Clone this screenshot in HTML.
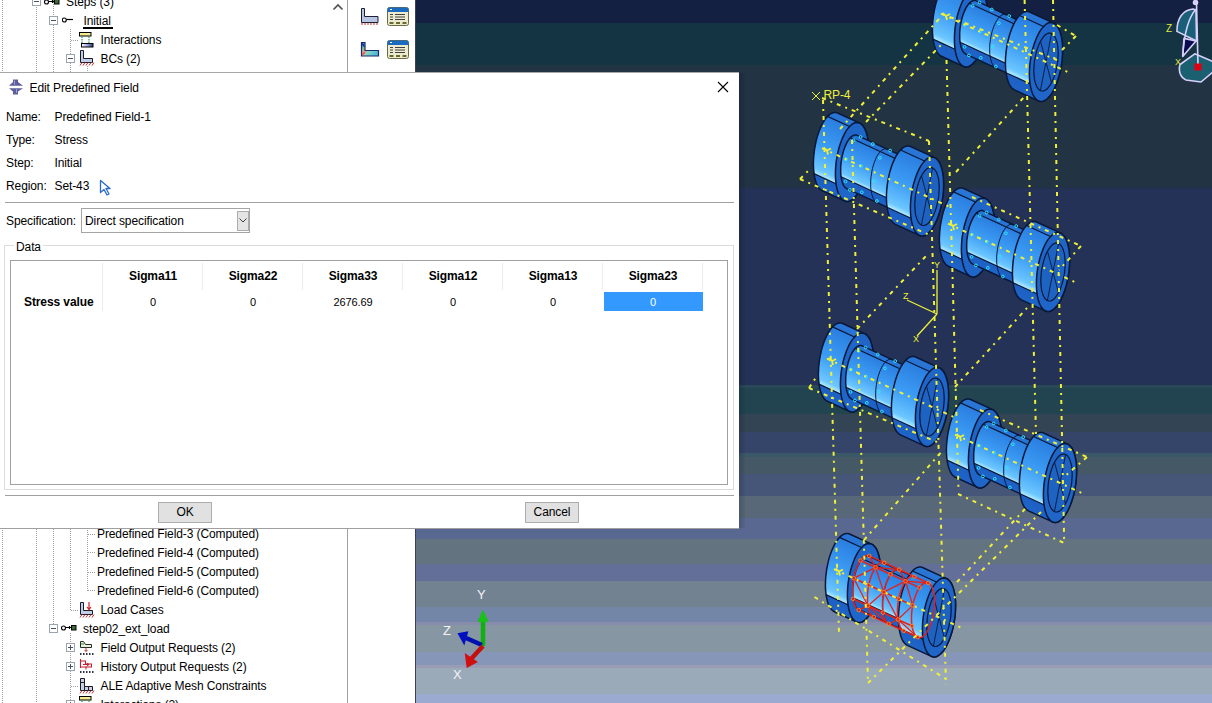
<!DOCTYPE html>
<html><head><meta charset="utf-8">
<style>
*{box-sizing:border-box;margin:0;padding:0}
html,body{width:1212px;height:703px;overflow:hidden;background:#fff}
body{position:relative;font-family:"Liberation Sans",sans-serif;font-size:12px;color:#000;letter-spacing:-0.1px}
.a{position:absolute}
.t{position:absolute;white-space:nowrap;line-height:21px;height:21px}
.vd{position:absolute;width:1px;background:repeating-linear-gradient(to bottom,#a0a0a0 0 1px,transparent 1px 2px)}
.hd{position:absolute;height:1px;background:repeating-linear-gradient(to right,#a0a0a0 0 1px,transparent 1px 2px)}
.bx{position:absolute;width:9px;height:9px;border:1px solid #9aa3b0;background:#fff}
.bx:before{content:"";position:absolute;left:1px;top:3px;width:5px;height:1px;background:#4a5060}
.bx.p:after{content:"";position:absolute;left:3px;top:1px;width:1px;height:5px;background:#4a5060}
#vp{position:absolute;left:415px;top:0;width:797px;height:703px;overflow:hidden}
#dlg{position:absolute;left:0;top:72px;width:739px;height:457px;background:#fff;border-top:1px solid #a8a8a8;border-bottom:1px solid #a0a0a0}
.btn{position:absolute;background:#e1e1e1;border:1px solid #adadad;text-align:center;line-height:18px}
</style></head><body>


<svg width="0" height="0" style="position:absolute">
<defs>
<linearGradient id="gBar" x1="0" x2="1"><stop offset="0" stop-color="#fff"/><stop offset="0.5" stop-color="#9aa8e0"/><stop offset="1" stop-color="#2a3a7a"/></linearGradient>
<g id="i-step1"><circle cx="2.3" cy="8" r="2" fill="#fff" stroke="#000" stroke-width="1.1"/><path d="M4.3 7.5H11" stroke="#000" stroke-width="1.2"/></g>
<g id="i-step3"><circle cx="2.5" cy="8" r="2" fill="#fff" stroke="#000" stroke-width="1.1"/><path d="M4.5 7.5H10.5M8.5 6v3" stroke="#000" stroke-width="1.1"/><rect x="10.5" y="5.5" width="4.5" height="4.5" fill="#3d6b3d" stroke="#000" stroke-width="1"/></g>
<g id="i-inter"><rect x="0.5" y="0.5" width="11.5" height="3.5" fill="#f5ec90" stroke="#000" stroke-width="1"/><path d="M3 4.5v7M10 4.5v7" stroke="#1e9a4a" stroke-width="1.2" stroke-dasharray="1.5 1"/><rect x="2.5" y="11.5" width="11.5" height="3.5" fill="url(#gBar)" stroke="#000" stroke-width="1"/></g>
<g id="i-bc"><path d="M1.5 0.5h3v8h9v4h-12z" fill="#c2cde6" stroke="#1a1a2a" stroke-width="1"/><path d="M1 15.5l2-3M4 15.5l2-3M7 15.5l2-3M10 15.5l2-3M13 15.5l2-3" stroke="#c03030" stroke-width="1"/></g>
<g id="i-lc"><path d="M1.5 0.5h3v8h9v4h-12z" fill="#c2cde6" stroke="#1a1a2a" stroke-width="1"/><path d="M10 0v7M8 5l2 2.5 2-2.5" stroke="#d02020" stroke-width="1.2" fill="none"/><path d="M1 15.5l2-3M4 15.5l2-3M7 15.5l2-3M10 15.5l2-3M13 15.5l2-3" stroke="#c03030" stroke-width="1"/></g>
<g id="i-fo"><path d="M1.5 1.5h3l2 3h6v3h-11z" fill="#e8f0e0" stroke="#203020" stroke-width="1"/><path d="M2 4h3" stroke="#3a8a3a"/><path d="M7 7.5v4M5.5 10l1.5 1.5 1.5-1.5" stroke="#c03030" fill="none"/><path d="M1 14h1.5M4 14h1.5M7 14h1.5M10 14h1.5M13 14h1.5" stroke="#303040" stroke-width="2"/></g>
<g id="i-ho"><path d="M1.5 1v9M1.5 3h5v3h6v3h-11" fill="none" stroke="#c02030" stroke-width="1.1"/><path d="M4 6.5h6M8 5l2 1.5-2 1.5M7 8.5v3" stroke="#c02030" fill="none"/><path d="M1 14h1.5M4 14h1.5M7 14h1.5M10 14h1.5M13 14h1.5" stroke="#303040" stroke-width="2"/></g>
<g id="i-ale"><path d="M1.5 0.5h4v8h8v4h-12z" fill="#c8d0e4" stroke="#1a1a2a" stroke-width="1"/><path d="M1.5 4.5h4M5.5 8.5v4M9.5 8.5v4" stroke="#1a1a2a"/><path d="M1 15.5l2-3M4 15.5l2-3M7 15.5l2-3M10 15.5l2-3M13 15.5l2-3" stroke="#c03030" stroke-width="1"/></g>
</defs></svg>

<div class="a" style="left:0;top:0;width:348px;height:703px;border-right:1px solid #a0a0a0;background:#fff"></div>
<div class="vd" style="left:2px;top:0;height:703px"></div>
<div class="vd" style="left:36px;top:7px;height:696px"></div>
<div class="vd" style="left:53px;top:0;height:16px"></div>
<div class="vd" style="left:53px;top:25px;height:599px"></div>
<div class="vd" style="left:70px;top:29px;height:25px"></div>
<div class="vd" style="left:70px;top:63px;height:547px"></div>
<div class="vd" style="left:70px;top:633px;height:70px"></div>
<div class="vd" style="left:87px;top:66px;height:525px"></div>
<svg class="a" style="left:332px;top:3px" width="12" height="8" viewBox="0 0 12 8"><path d="M1.5 6.5L6 2l4.5 4.5" stroke="#505050" stroke-width="1.6" fill="none"/></svg>

<div class="bx" style="left:32px;top:-3px"></div>
<svg class="a" style="left:44px;top:-6px" width="16" height="16"><use href="#i-step3"/></svg>
<div class="t" style="left:66px;top:-8px">Steps (3)</div>
<div class="bx" style="left:49px;top:16px"></div>
<svg class="a" style="left:62px;top:12px" width="16" height="16"><use href="#i-step1"/></svg>
<div class="t" style="left:83.5px;top:11px">Initial</div>
<div class="a" style="left:83px;top:27px;width:30px;height:2px;background:#000"></div>
<div class="hd" style="left:71px;top:40px;width:7px"></div>
<svg class="a" style="left:79px;top:32px" width="16" height="16"><use href="#i-inter"/></svg>
<div class="t" style="left:100.5px;top:30px">Interactions</div>
<div class="bx" style="left:66px;top:54px"></div>
<svg class="a" style="left:79px;top:50px" width="16" height="16"><use href="#i-bc"/></svg>
<div class="t" style="left:100.5px;top:49px">BCs (2)</div>
<div class="hd" style="left:88px;top:534px;width:7px"></div>
<div class="t" style="left:97px;top:524px">Predefined Field-3 (Computed)</div>
<div class="hd" style="left:88px;top:552px;width:7px"></div>
<div class="t" style="left:97px;top:543px">Predefined Field-4 (Computed)</div>
<div class="hd" style="left:88px;top:572px;width:7px"></div>
<div class="t" style="left:97px;top:562px">Predefined Field-5 (Computed)</div>
<div class="hd" style="left:88px;top:590px;width:7px"></div>
<div class="t" style="left:97px;top:581px">Predefined Field-6 (Computed)</div>
<div class="hd" style="left:71px;top:610px;width:7px"></div>
<svg class="a" style="left:79px;top:602px" width="16" height="16"><use href="#i-lc"/></svg>
<div class="t" style="left:100.5px;top:600px">Load Cases</div>
<div class="bx" style="left:49px;top:624px"></div>
<svg class="a" style="left:61px;top:620px" width="16" height="16"><use href="#i-step3"/></svg>
<div class="t" style="left:83px;top:619px">step02_ext_load</div>
<div class="bx p" style="left:66px;top:643px"></div>
<svg class="a" style="left:79px;top:640px" width="16" height="16"><use href="#i-fo"/></svg>
<div class="t" style="left:100.5px;top:638px">Field Output Requests (2)</div>
<div class="bx p" style="left:66px;top:662px"></div>
<svg class="a" style="left:79px;top:658px" width="16" height="16"><use href="#i-ho"/></svg>
<div class="t" style="left:100.5px;top:657px">History Output Requests (2)</div>
<div class="hd" style="left:71px;top:686px;width:7px"></div>
<svg class="a" style="left:79px;top:678px" width="16" height="16"><use href="#i-ale"/></svg>
<div class="t" style="left:100.5px;top:676px">ALE Adaptive Mesh Constraints</div>
<div class="bx p" style="left:66px;top:700px"></div>
<svg class="a" style="left:79px;top:696px" width="16" height="16"><use href="#i-inter"/></svg>
<div class="t" style="left:100.5px;top:695px">Interactions (2)</div>

<svg class="a" style="left:360px;top:7px" width="20" height="19" viewBox="0 0 20 19"><path d="M1.5 1.5h3v8h13.5v6h-16.5z" fill="#b8c4e4" stroke="#202030" stroke-width="1"/><path d="M2 16v2M5 16v2M8 16v2M11 16v2M14 16v2M17 16v2" stroke="#c03030" stroke-width="1"/></svg>
<svg class="a" style="left:387px;top:7px" width="23" height="20" viewBox="0 0 23 20"><rect x="0.5" y="0.5" width="21" height="18" rx="2" fill="#ecebd0" stroke="#6a6a40"/><path d="M0.5 5V2.5a2 2 0 0 1 2-2h17a2 2 0 0 1 2 2V5z" fill="#1a6ac0"/><path d="M3 2.5h2" stroke="#fff"/><path d="M3 7.5h3M3 10h3M3 12.5h3M8 7.5h10M8 10h10M8 12.5h10" stroke="#404040" stroke-width="1"/><path d="M2.5 16h4M9 16h4M15.5 16h4" stroke="#6a6a30" stroke-width="2"/></svg>
<svg class="a" style="left:360px;top:41px" width="21" height="17" viewBox="0 0 21 17"><defs><linearGradient id="gct" x1="0" y1="0" x2="1" y2="0.6"><stop offset="0" stop-color="#3050c8"/><stop offset="0.25" stop-color="#70c890"/><stop offset="0.4" stop-color="#f0a090"/><stop offset="0.6" stop-color="#80d8c0"/><stop offset="1" stop-color="#50b8d8"/></linearGradient></defs><path d="M1.5 1.5h3.5v8h13.5v5.5h-17z" fill="url(#gct)" stroke="#1a2a6a" stroke-width="1.2"/><path d="M2 2.5l2.5 3" stroke="#1830a0" stroke-width="1.5"/><path d="M2 14l3-3" stroke="#e05060" stroke-width="1.5"/></svg>
<svg class="a" style="left:387px;top:40px" width="23" height="20" viewBox="0 0 23 20"><rect x="0.5" y="0.5" width="21" height="18" rx="2" fill="#ecebd0" stroke="#6a6a40"/><path d="M0.5 5V2.5a2 2 0 0 1 2-2h17a2 2 0 0 1 2 2V5z" fill="#1a6ac0"/><path d="M3 2.5h2" stroke="#fff"/><path d="M3 7.5h3M3 10h3M3 12.5h3M8 7.5h10M8 10h10M8 12.5h10" stroke="#404040" stroke-width="1"/><path d="M2.5 16h4M9 16h4M15.5 16h4" stroke="#6a6a30" stroke-width="2"/></svg>


<div id="vp">
<svg width="797" height="703" viewBox="415 0 797 703" style="position:absolute;left:0;top:0">
<rect x="415" y="0" width="797" height="23" fill="#142042"/>
<rect x="415" y="23" width="797" height="42" fill="#143444"/>
<rect x="415" y="65" width="797" height="122" fill="#223344"/>
<rect x="415" y="187" width="797" height="2" fill="#22324e"/>
<rect x="415" y="189" width="797" height="196" fill="#233256"/>
<rect x="415" y="385" width="797" height="3" fill="#294858"/>
<rect x="415" y="388" width="797" height="26" fill="#214450"/>
<rect x="415" y="414" width="797" height="18" fill="#334454"/>
<rect x="415" y="432" width="797" height="21" fill="#35456a"/>
<rect x="415" y="453" width="797" height="4" fill="#3a5868"/>
<rect x="415" y="457" width="797" height="17" fill="#445866"/>
<rect x="415" y="474" width="797" height="22" fill="#465678"/>
<rect x="415" y="496" width="797" height="22" fill="#586878"/>
<rect x="415" y="518" width="797" height="21" fill="#586890"/>
<rect x="415" y="539" width="797" height="25" fill="#637380"/>
<rect x="415" y="564" width="797" height="17" fill="#646f99"/>
<rect x="415" y="581" width="797" height="26" fill="#728290"/>
<rect x="415" y="607" width="797" height="15" fill="#7486a8"/>
<rect x="415" y="622" width="797" height="3" fill="#888cac"/>
<rect x="415" y="625" width="797" height="27" fill="#8696a3"/>
<rect x="415" y="652" width="797" height="13" fill="#8696b8"/>
<rect x="415" y="665" width="797" height="3" fill="#9a9cb4"/>
<rect x="415" y="668" width="797" height="26" fill="#9aaab8"/>
<rect x="415" y="694" width="797" height="9" fill="#9aaad0"/>
<rect x="415" y="0" width="1" height="703" fill="#3a4050"/>
<linearGradient id="g0L" gradientUnits="userSpaceOnUse" x1="976.1" y1="-12.6" x2="943.9" y2="57.5"><stop offset="0" stop-color="#2a76d6"/><stop offset="0.095" stop-color="#2874d4"/><stop offset="0.095" stop-color="#2a7ee0"/><stop offset="0.469" stop-color="#3c9cf4"/><stop offset="0.772" stop-color="#6cc6ff"/><stop offset="0.842" stop-color="#b8eeff"/><stop offset="0.842" stop-color="#1d60c4"/><stop offset="1" stop-color="#1f64c8"/></linearGradient>
<linearGradient id="g0S" gradientUnits="userSpaceOnUse" x1="1007.0" y1="15.1" x2="985.0" y2="62.9"><stop offset="0" stop-color="#2a76d6"/><stop offset="0.095" stop-color="#2874d4"/><stop offset="0.095" stop-color="#2a7ee0"/><stop offset="0.469" stop-color="#3c9cf4"/><stop offset="0.772" stop-color="#6cc6ff"/><stop offset="0.842" stop-color="#b8eeff"/><stop offset="0.842" stop-color="#1d60c4"/><stop offset="1" stop-color="#1f64c8"/></linearGradient>
<linearGradient id="g0R" gradientUnits="userSpaceOnUse" x1="1050.1" y1="21.5" x2="1017.9" y2="91.5"><stop offset="0" stop-color="#2a76d6"/><stop offset="0.095" stop-color="#2874d4"/><stop offset="0.095" stop-color="#2a7ee0"/><stop offset="0.469" stop-color="#3c9cf4"/><stop offset="0.772" stop-color="#6cc6ff"/><stop offset="0.842" stop-color="#b8eeff"/><stop offset="0.842" stop-color="#1d60c4"/><stop offset="1" stop-color="#1f64c8"/></linearGradient>
<path d="M978.6,-11.4 L980.0,-10.6 L981.3,-9.3 L982.6,-7.8 L983.7,-5.9 L984.7,-3.6 L985.5,-1.1 L986.2,1.7 L986.8,4.8 L987.2,8.1 L987.5,11.5 L987.6,15.1 L987.5,18.9 L987.3,22.7 L986.9,26.6 L986.4,30.4 L985.7,34.3 L984.9,38.1 L984.0,41.7 L982.9,45.3 L981.7,48.7 L980.4,51.8 L979.0,54.8 L977.6,57.4 L976.0,59.8 L974.5,61.9 L972.9,63.6 L971.2,65.0 L969.6,66.0 L968.0,66.7 L966.4,67.0 L964.9,66.9 L963.4,66.4 L941.4,56.3 L940.0,55.4 L938.7,54.2 L937.4,52.7 L936.3,50.7 L935.3,48.5 L934.5,46.0 L933.8,43.2 L933.2,40.1 L932.8,36.8 L932.5,33.4 L932.4,29.7 L932.5,26.0 L932.7,22.2 L933.1,18.3 L933.6,14.4 L934.3,10.6 L935.1,6.8 L936.0,3.1 L937.1,-0.4 L938.3,-3.8 L939.6,-6.9 L941.0,-9.9 L942.4,-12.5 L944.0,-14.9 L945.5,-17.0 L947.1,-18.7 L948.8,-20.1 L950.4,-21.2 L952.0,-21.8 L953.6,-22.1 L955.1,-22.0 L956.6,-21.5Z" fill="url(#g0L)" stroke="#081838" stroke-width="1.5"/>
<path d="M968.5,-8.0 L946.5,-18.1" stroke="#081838" stroke-width="1.2"/>
<path d="M955.0,49.2 L933.0,39.1" stroke="#081838" stroke-width="1.2"/>
<path d="M954.4,39.4 L954.5,35.6 L954.7,31.8 L955.1,27.9 L955.7,24.0 L956.4,20.2 L957.2,16.4 L958.2,12.8 L959.3,9.2 L960.5,5.9 L961.8,2.8 L963.2,-0.1 L964.7,-2.8 L966.2,-5.1 L967.8,-7.1 L969.4,-8.8 L971.0,-10.2 L972.6,-11.2 L974.2,-11.8 L975.8,-12.0 L977.3,-11.8 L978.8,-11.3 L980.2,-10.4 L981.5,-9.1 L982.7,-7.5 L983.8,-5.6 L984.8,-3.3 L985.6,-0.7 L986.3,2.1 L986.9,5.2 L987.3,8.5 L987.5,12.0 L987.6,15.6 L987.5,19.4 L987.3,23.2 L986.9,27.1 L986.3,31.0 L985.6,34.8 L984.8,38.6 L983.8,42.2 L982.7,45.8 L981.5,49.1 L980.2,52.2 L978.8,55.1 L977.3,57.8 L975.8,60.1 L974.2,62.1 L972.6,63.8 L971.0,65.2 L969.4,66.2 L967.8,66.8 L966.2,67.0 L964.7,66.8 L963.2,66.3 L961.8,65.4 L960.5,64.1 L959.3,62.5 L958.2,60.6 L957.2,58.3 L956.4,55.7 L955.7,52.9 L955.1,49.8 L954.7,46.5 L954.5,43.0Z" fill="#1f66c8" stroke="#081838" stroke-width="1.5"/>
<path d="M1027.2,24.4 L1028.2,24.9 L1029.1,25.8 L1029.9,26.8 L1030.7,28.2 L1031.3,29.7 L1031.9,31.4 L1032.4,33.3 L1032.8,35.4 L1033.1,37.7 L1033.3,40.0 L1033.3,42.5 L1033.3,45.1 L1033.2,47.7 L1032.9,50.3 L1032.5,53.0 L1032.1,55.6 L1031.5,58.2 L1030.9,60.7 L1030.1,63.1 L1029.3,65.4 L1028.4,67.6 L1027.5,69.6 L1026.5,71.4 L1025.4,73.0 L1024.4,74.5 L1023.3,75.7 L1022.2,76.6 L1021.0,77.3 L1019.9,77.8 L1018.9,78.0 L1017.8,77.9 L1016.8,77.6 L965.8,54.1 L964.8,53.5 L963.9,52.7 L963.1,51.6 L962.3,50.3 L961.7,48.8 L961.1,47.0 L960.6,45.1 L960.2,43.0 L959.9,40.8 L959.7,38.4 L959.7,36.0 L959.7,33.4 L959.8,30.8 L960.1,28.1 L960.5,25.5 L960.9,22.9 L961.5,20.3 L962.1,17.8 L962.9,15.3 L963.7,13.0 L964.6,10.9 L965.5,8.9 L966.5,7.0 L967.6,5.4 L968.6,4.0 L969.7,2.8 L970.8,1.9 L972.0,1.2 L973.1,0.7 L974.1,0.5 L975.2,0.6 L976.2,0.9Z" fill="url(#g0S)" stroke="#081838" stroke-width="1.5"/>
<path d="M1020.3,26.7 L969.3,3.3" stroke="#081838" stroke-width="1.2"/>
<path d="M1011.1,65.8 L960.1,42.3" stroke="#081838" stroke-width="1.2"/>
<path d="M995.8,67.9 L994.8,67.3 L993.9,66.5 L993.1,65.4 L992.3,64.1 L991.7,62.6 L991.1,60.8 L990.6,58.9 L990.2,56.8 L989.9,54.6 L989.7,52.2 L989.7,49.8 L989.7,47.2 L989.8,44.6 L990.1,41.9 L990.5,39.3 L990.9,36.7 L991.5,34.1 L992.1,31.6 L992.9,29.1 L993.7,26.8 L994.6,24.7 L995.5,22.7 L996.5,20.8 L997.6,19.2 L998.6,17.8 L999.7,16.6 L1000.8,15.7 L1002.0,15.0 L1003.1,14.5 L1004.1,14.3 L1005.2,14.4 L1006.2,14.7" fill="none" stroke="#081838" stroke-width="1"/>
<path d="M1053.6,23.1 L1055.0,23.9 L1056.3,25.2 L1057.6,26.7 L1058.7,28.6 L1059.7,30.9 L1060.5,33.4 L1061.2,36.2 L1061.8,39.3 L1062.2,42.6 L1062.5,46.0 L1062.6,49.6 L1062.5,53.4 L1062.3,57.2 L1061.9,61.1 L1061.4,64.9 L1060.7,68.8 L1059.9,72.6 L1059.0,76.2 L1057.9,79.8 L1056.7,83.2 L1055.4,86.3 L1054.0,89.3 L1052.6,91.9 L1051.0,94.3 L1049.5,96.4 L1047.9,98.1 L1046.2,99.5 L1044.6,100.5 L1043.0,101.2 L1041.4,101.5 L1039.9,101.4 L1038.4,100.9 L1014.4,89.9 L1013.0,89.0 L1011.7,87.8 L1010.4,86.2 L1009.3,84.3 L1008.3,82.1 L1007.5,79.6 L1006.8,76.7 L1006.2,73.7 L1005.8,70.4 L1005.5,66.9 L1005.4,63.3 L1005.5,59.6 L1005.7,55.8 L1006.1,51.9 L1006.6,48.0 L1007.3,44.2 L1008.1,40.4 L1009.0,36.7 L1010.1,33.2 L1011.3,29.8 L1012.6,26.6 L1014.0,23.7 L1015.4,21.0 L1017.0,18.6 L1018.5,16.6 L1020.1,14.8 L1021.8,13.4 L1023.4,12.4 L1025.0,11.8 L1026.6,11.5 L1028.1,11.6 L1029.6,12.0Z" fill="url(#g0R)" stroke="#081838" stroke-width="1.5"/>
<path d="M1043.5,26.5 L1019.5,15.5" stroke="#081838" stroke-width="1.2"/>
<path d="M1030.0,83.7 L1006.0,72.7" stroke="#081838" stroke-width="1.2"/>
<path d="M1029.4,73.8 L1029.5,70.1 L1029.7,66.3 L1030.1,62.4 L1030.7,58.5 L1031.4,54.7 L1032.2,50.9 L1033.2,47.3 L1034.3,43.7 L1035.5,40.4 L1036.8,37.3 L1038.2,34.4 L1039.7,31.7 L1041.2,29.4 L1042.8,27.4 L1044.4,25.7 L1046.0,24.3 L1047.6,23.3 L1049.2,22.7 L1050.8,22.5 L1052.3,22.7 L1053.8,23.2 L1055.2,24.1 L1056.5,25.4 L1057.7,27.0 L1058.8,28.9 L1059.8,31.2 L1060.6,33.8 L1061.3,36.6 L1061.9,39.7 L1062.3,43.0 L1062.5,46.5 L1062.6,50.1 L1062.5,53.9 L1062.3,57.7 L1061.9,61.6 L1061.3,65.5 L1060.6,69.3 L1059.8,73.1 L1058.8,76.7 L1057.7,80.3 L1056.5,83.6 L1055.2,86.7 L1053.8,89.6 L1052.3,92.3 L1050.8,94.6 L1049.2,96.6 L1047.6,98.3 L1046.0,99.7 L1044.4,100.7 L1042.8,101.3 L1041.2,101.5 L1039.7,101.3 L1038.2,100.8 L1036.8,99.9 L1035.5,98.6 L1034.3,97.0 L1033.2,95.1 L1032.2,92.8 L1031.4,90.2 L1030.7,87.4 L1030.1,84.3 L1029.7,81.0 L1029.5,77.5Z" fill="#1f66c8" stroke="#081838" stroke-width="1.5"/>
<path d="M1033.8,70.7 L1033.9,67.9 L1034.1,65.1 L1034.3,62.3 L1034.7,59.5 L1035.3,56.6 L1035.9,53.9 L1036.6,51.2 L1037.4,48.6 L1038.3,46.1 L1039.2,43.8 L1040.3,41.7 L1041.3,39.8 L1042.5,38.1 L1043.6,36.6 L1044.8,35.3 L1046.0,34.3 L1047.2,33.6 L1048.4,33.2 L1049.5,33.0 L1050.7,33.1 L1051.7,33.5 L1052.8,34.2 L1053.7,35.1 L1054.6,36.3 L1055.4,37.7 L1056.1,39.4 L1056.7,41.3 L1057.3,43.4 L1057.7,45.6 L1057.9,48.1 L1058.1,50.6 L1058.2,53.3 L1058.1,56.1 L1057.9,58.9 L1057.7,61.7 L1057.3,64.5 L1056.7,67.4 L1056.1,70.1 L1055.4,72.8 L1054.6,75.4 L1053.7,77.9 L1052.8,80.2 L1051.7,82.3 L1050.7,84.2 L1049.5,85.9 L1048.4,87.4 L1047.2,88.7 L1046.0,89.7 L1044.8,90.4 L1043.6,90.8 L1042.5,91.0 L1041.3,90.9 L1040.3,90.5 L1039.2,89.8 L1038.3,88.9 L1037.4,87.7 L1036.6,86.3 L1035.9,84.6 L1035.3,82.7 L1034.7,80.6 L1034.3,78.4 L1034.1,75.9 L1033.9,73.4Z" fill="#1e62c2" stroke="#081838" stroke-width="1.2"/>
<path d="M1051.6,33.4 L1040.4,90.6" stroke="#081838" stroke-width="0.9"/>
<path d="M1051.5,82.8 L1040.5,41.2" stroke="#081838" stroke-width="0.9"/>
<linearGradient id="g1L" gradientUnits="userSpaceOnUse" x1="857.1" y1="121.9" x2="824.9" y2="192.0"><stop offset="0" stop-color="#2a76d6"/><stop offset="0.095" stop-color="#2874d4"/><stop offset="0.095" stop-color="#2a7ee0"/><stop offset="0.469" stop-color="#3c9cf4"/><stop offset="0.772" stop-color="#6cc6ff"/><stop offset="0.842" stop-color="#b8eeff"/><stop offset="0.842" stop-color="#1d60c4"/><stop offset="1" stop-color="#1f64c8"/></linearGradient>
<linearGradient id="g1S" gradientUnits="userSpaceOnUse" x1="888.0" y1="149.6" x2="866.0" y2="197.4"><stop offset="0" stop-color="#2a76d6"/><stop offset="0.095" stop-color="#2874d4"/><stop offset="0.095" stop-color="#2a7ee0"/><stop offset="0.469" stop-color="#3c9cf4"/><stop offset="0.772" stop-color="#6cc6ff"/><stop offset="0.842" stop-color="#b8eeff"/><stop offset="0.842" stop-color="#1d60c4"/><stop offset="1" stop-color="#1f64c8"/></linearGradient>
<linearGradient id="g1R" gradientUnits="userSpaceOnUse" x1="931.1" y1="156.0" x2="898.9" y2="226.0"><stop offset="0" stop-color="#2a76d6"/><stop offset="0.095" stop-color="#2874d4"/><stop offset="0.095" stop-color="#2a7ee0"/><stop offset="0.469" stop-color="#3c9cf4"/><stop offset="0.772" stop-color="#6cc6ff"/><stop offset="0.842" stop-color="#b8eeff"/><stop offset="0.842" stop-color="#1d60c4"/><stop offset="1" stop-color="#1f64c8"/></linearGradient>
<path d="M859.6,123.1 L861.0,123.9 L862.3,125.2 L863.6,126.7 L864.7,128.6 L865.7,130.9 L866.5,133.4 L867.2,136.2 L867.8,139.3 L868.2,142.6 L868.5,146.0 L868.6,149.6 L868.5,153.4 L868.3,157.2 L867.9,161.1 L867.4,164.9 L866.7,168.8 L865.9,172.6 L865.0,176.2 L863.9,179.8 L862.7,183.2 L861.4,186.3 L860.0,189.3 L858.6,191.9 L857.0,194.3 L855.5,196.4 L853.9,198.1 L852.2,199.5 L850.6,200.5 L849.0,201.2 L847.4,201.5 L845.9,201.4 L844.4,200.9 L822.4,190.8 L821.0,189.9 L819.7,188.7 L818.4,187.2 L817.3,185.2 L816.3,183.0 L815.5,180.5 L814.8,177.7 L814.2,174.6 L813.8,171.3 L813.5,167.9 L813.4,164.2 L813.5,160.5 L813.7,156.7 L814.1,152.8 L814.6,148.9 L815.3,145.1 L816.1,141.3 L817.0,137.6 L818.1,134.1 L819.3,130.7 L820.6,127.6 L822.0,124.6 L823.4,122.0 L825.0,119.6 L826.5,117.5 L828.1,115.8 L829.8,114.4 L831.4,113.3 L833.0,112.7 L834.6,112.4 L836.1,112.5 L837.6,113.0Z" fill="url(#g1L)" stroke="#081838" stroke-width="1.5"/>
<path d="M849.5,126.5 L827.5,116.4" stroke="#081838" stroke-width="1.2"/>
<path d="M836.0,183.7 L814.0,173.6" stroke="#081838" stroke-width="1.2"/>
<path d="M835.4,173.8 L835.5,170.1 L835.7,166.3 L836.1,162.4 L836.7,158.5 L837.4,154.7 L838.2,150.9 L839.2,147.3 L840.3,143.7 L841.5,140.4 L842.8,137.3 L844.2,134.4 L845.7,131.7 L847.2,129.4 L848.8,127.4 L850.4,125.7 L852.0,124.3 L853.6,123.3 L855.2,122.7 L856.8,122.5 L858.3,122.7 L859.8,123.2 L861.2,124.1 L862.5,125.4 L863.7,127.0 L864.8,128.9 L865.8,131.2 L866.6,133.8 L867.3,136.6 L867.9,139.7 L868.3,143.0 L868.5,146.5 L868.6,150.2 L868.5,153.9 L868.3,157.7 L867.9,161.6 L867.3,165.5 L866.6,169.3 L865.8,173.1 L864.8,176.7 L863.7,180.3 L862.5,183.6 L861.2,186.7 L859.8,189.6 L858.3,192.3 L856.8,194.6 L855.2,196.6 L853.6,198.3 L852.0,199.7 L850.4,200.7 L848.8,201.3 L847.2,201.5 L845.7,201.3 L844.2,200.8 L842.8,199.9 L841.5,198.6 L840.3,197.0 L839.2,195.1 L838.2,192.8 L837.4,190.2 L836.7,187.4 L836.1,184.3 L835.7,181.0 L835.5,177.5Z" fill="#1f66c8" stroke="#081838" stroke-width="1.5"/>
<path d="M908.2,158.9 L909.2,159.4 L910.1,160.3 L910.9,161.3 L911.7,162.7 L912.3,164.2 L912.9,165.9 L913.4,167.8 L913.8,169.9 L914.1,172.2 L914.3,174.5 L914.3,177.0 L914.3,179.6 L914.2,182.2 L913.9,184.8 L913.5,187.5 L913.1,190.1 L912.5,192.7 L911.9,195.2 L911.1,197.6 L910.3,199.9 L909.4,202.1 L908.5,204.1 L907.5,205.9 L906.4,207.5 L905.4,209.0 L904.3,210.2 L903.2,211.1 L902.0,211.8 L900.9,212.3 L899.9,212.5 L898.8,212.4 L897.8,212.1 L846.8,188.6 L845.8,188.0 L844.9,187.2 L844.1,186.1 L843.3,184.8 L842.7,183.3 L842.1,181.5 L841.6,179.6 L841.2,177.5 L840.9,175.3 L840.7,172.9 L840.7,170.5 L840.7,167.9 L840.8,165.3 L841.1,162.6 L841.5,160.0 L841.9,157.4 L842.5,154.8 L843.1,152.3 L843.9,149.8 L844.7,147.5 L845.6,145.4 L846.5,143.4 L847.5,141.5 L848.6,139.9 L849.6,138.5 L850.7,137.3 L851.8,136.4 L853.0,135.7 L854.1,135.2 L855.1,135.0 L856.2,135.1 L857.2,135.4Z" fill="url(#g1S)" stroke="#081838" stroke-width="1.5"/>
<path d="M901.3,161.2 L850.3,137.8" stroke="#081838" stroke-width="1.2"/>
<path d="M892.1,200.3 L841.1,176.8" stroke="#081838" stroke-width="1.2"/>
<path d="M876.8,202.4 L875.8,201.8 L874.9,201.0 L874.1,199.9 L873.3,198.6 L872.7,197.1 L872.1,195.3 L871.6,193.4 L871.2,191.3 L870.9,189.1 L870.7,186.7 L870.7,184.3 L870.7,181.7 L870.8,179.1 L871.1,176.4 L871.5,173.8 L871.9,171.2 L872.5,168.6 L873.1,166.1 L873.9,163.6 L874.7,161.3 L875.6,159.2 L876.5,157.2 L877.5,155.3 L878.6,153.7 L879.6,152.3 L880.7,151.1 L881.8,150.2 L883.0,149.5 L884.1,149.0 L885.1,148.8 L886.2,148.9 L887.2,149.2" fill="none" stroke="#081838" stroke-width="1"/>
<path d="M934.6,157.6 L936.0,158.4 L937.3,159.7 L938.6,161.2 L939.7,163.1 L940.7,165.4 L941.5,167.9 L942.2,170.7 L942.8,173.8 L943.2,177.1 L943.5,180.5 L943.6,184.1 L943.5,187.9 L943.3,191.7 L942.9,195.6 L942.4,199.4 L941.7,203.3 L940.9,207.1 L940.0,210.7 L938.9,214.3 L937.7,217.7 L936.4,220.8 L935.0,223.8 L933.6,226.4 L932.0,228.8 L930.5,230.9 L928.9,232.6 L927.2,234.0 L925.6,235.0 L924.0,235.7 L922.4,236.0 L920.9,235.9 L919.4,235.4 L895.4,224.4 L894.0,223.5 L892.7,222.3 L891.4,220.7 L890.3,218.8 L889.3,216.6 L888.5,214.1 L887.8,211.2 L887.2,208.2 L886.8,204.9 L886.5,201.4 L886.4,197.8 L886.5,194.1 L886.7,190.3 L887.1,186.4 L887.6,182.5 L888.3,178.7 L889.1,174.9 L890.0,171.2 L891.1,167.7 L892.3,164.3 L893.6,161.1 L895.0,158.2 L896.4,155.5 L898.0,153.1 L899.5,151.1 L901.1,149.3 L902.8,147.9 L904.4,146.9 L906.0,146.3 L907.6,146.0 L909.1,146.1 L910.6,146.5Z" fill="url(#g1R)" stroke="#081838" stroke-width="1.5"/>
<path d="M924.5,161.0 L900.5,150.0" stroke="#081838" stroke-width="1.2"/>
<path d="M911.0,218.2 L887.0,207.2" stroke="#081838" stroke-width="1.2"/>
<path d="M910.4,208.3 L910.5,204.6 L910.7,200.8 L911.1,196.9 L911.7,193.0 L912.4,189.2 L913.2,185.4 L914.2,181.8 L915.3,178.2 L916.5,174.9 L917.8,171.8 L919.2,168.9 L920.7,166.2 L922.2,163.9 L923.8,161.9 L925.4,160.2 L927.0,158.8 L928.6,157.8 L930.2,157.2 L931.8,157.0 L933.3,157.2 L934.8,157.7 L936.2,158.6 L937.5,159.9 L938.7,161.5 L939.8,163.4 L940.8,165.7 L941.6,168.3 L942.3,171.1 L942.9,174.2 L943.3,177.5 L943.5,181.0 L943.6,184.7 L943.5,188.4 L943.3,192.2 L942.9,196.1 L942.3,200.0 L941.6,203.8 L940.8,207.6 L939.8,211.2 L938.7,214.8 L937.5,218.1 L936.2,221.2 L934.8,224.1 L933.3,226.8 L931.8,229.1 L930.2,231.1 L928.6,232.8 L927.0,234.2 L925.4,235.2 L923.8,235.8 L922.2,236.0 L920.7,235.8 L919.2,235.3 L917.8,234.4 L916.5,233.1 L915.3,231.5 L914.2,229.6 L913.2,227.3 L912.4,224.7 L911.7,221.9 L911.1,218.8 L910.7,215.5 L910.5,212.0Z" fill="#1f66c8" stroke="#081838" stroke-width="1.5"/>
<path d="M914.8,205.2 L914.9,202.4 L915.1,199.6 L915.3,196.8 L915.7,194.0 L916.3,191.1 L916.9,188.4 L917.6,185.7 L918.4,183.1 L919.3,180.6 L920.2,178.3 L921.3,176.2 L922.3,174.3 L923.5,172.6 L924.6,171.1 L925.8,169.8 L927.0,168.8 L928.2,168.1 L929.4,167.7 L930.5,167.5 L931.7,167.6 L932.7,168.0 L933.8,168.7 L934.7,169.6 L935.6,170.8 L936.4,172.2 L937.1,173.9 L937.7,175.8 L938.3,177.9 L938.7,180.1 L938.9,182.6 L939.1,185.1 L939.2,187.8 L939.1,190.6 L938.9,193.4 L938.7,196.2 L938.3,199.0 L937.7,201.9 L937.1,204.6 L936.4,207.3 L935.6,209.9 L934.7,212.4 L933.8,214.7 L932.7,216.8 L931.7,218.7 L930.5,220.4 L929.4,221.9 L928.2,223.2 L927.0,224.2 L925.8,224.9 L924.6,225.3 L923.5,225.5 L922.3,225.4 L921.3,225.0 L920.2,224.3 L919.3,223.4 L918.4,222.2 L917.6,220.8 L916.9,219.1 L916.3,217.2 L915.7,215.1 L915.3,212.9 L915.1,210.4 L914.9,207.9Z" fill="#1e62c2" stroke="#081838" stroke-width="1.2"/>
<path d="M932.6,167.9 L921.4,225.1" stroke="#081838" stroke-width="0.9"/>
<path d="M932.5,217.3 L921.5,175.7" stroke="#081838" stroke-width="0.9"/>
<linearGradient id="g2L" gradientUnits="userSpaceOnUse" x1="983.1" y1="197.4" x2="950.9" y2="267.5"><stop offset="0" stop-color="#2a76d6"/><stop offset="0.095" stop-color="#2874d4"/><stop offset="0.095" stop-color="#2a7ee0"/><stop offset="0.469" stop-color="#3c9cf4"/><stop offset="0.772" stop-color="#6cc6ff"/><stop offset="0.842" stop-color="#b8eeff"/><stop offset="0.842" stop-color="#1d60c4"/><stop offset="1" stop-color="#1f64c8"/></linearGradient>
<linearGradient id="g2S" gradientUnits="userSpaceOnUse" x1="1014.0" y1="225.1" x2="992.0" y2="272.9"><stop offset="0" stop-color="#2a76d6"/><stop offset="0.095" stop-color="#2874d4"/><stop offset="0.095" stop-color="#2a7ee0"/><stop offset="0.469" stop-color="#3c9cf4"/><stop offset="0.772" stop-color="#6cc6ff"/><stop offset="0.842" stop-color="#b8eeff"/><stop offset="0.842" stop-color="#1d60c4"/><stop offset="1" stop-color="#1f64c8"/></linearGradient>
<linearGradient id="g2R" gradientUnits="userSpaceOnUse" x1="1057.1" y1="231.5" x2="1024.9" y2="301.5"><stop offset="0" stop-color="#2a76d6"/><stop offset="0.095" stop-color="#2874d4"/><stop offset="0.095" stop-color="#2a7ee0"/><stop offset="0.469" stop-color="#3c9cf4"/><stop offset="0.772" stop-color="#6cc6ff"/><stop offset="0.842" stop-color="#b8eeff"/><stop offset="0.842" stop-color="#1d60c4"/><stop offset="1" stop-color="#1f64c8"/></linearGradient>
<path d="M985.6,198.6 L987.0,199.4 L988.3,200.7 L989.6,202.2 L990.7,204.1 L991.7,206.4 L992.5,208.9 L993.2,211.7 L993.8,214.8 L994.2,218.1 L994.5,221.5 L994.6,225.1 L994.5,228.9 L994.3,232.7 L993.9,236.6 L993.4,240.4 L992.7,244.3 L991.9,248.1 L991.0,251.7 L989.9,255.3 L988.7,258.7 L987.4,261.8 L986.0,264.8 L984.6,267.4 L983.0,269.8 L981.5,271.9 L979.9,273.6 L978.2,275.0 L976.6,276.0 L975.0,276.7 L973.4,277.0 L971.9,276.9 L970.4,276.4 L948.4,266.3 L947.0,265.4 L945.7,264.2 L944.4,262.7 L943.3,260.7 L942.3,258.5 L941.5,256.0 L940.8,253.2 L940.2,250.1 L939.8,246.8 L939.5,243.4 L939.4,239.7 L939.5,236.0 L939.7,232.2 L940.1,228.3 L940.6,224.4 L941.3,220.6 L942.1,216.8 L943.0,213.1 L944.1,209.6 L945.3,206.2 L946.6,203.1 L948.0,200.1 L949.4,197.5 L951.0,195.1 L952.5,193.0 L954.1,191.3 L955.8,189.9 L957.4,188.8 L959.0,188.2 L960.6,187.9 L962.1,188.0 L963.6,188.5Z" fill="url(#g2L)" stroke="#081838" stroke-width="1.5"/>
<path d="M975.5,202.0 L953.5,191.9" stroke="#081838" stroke-width="1.2"/>
<path d="M962.0,259.2 L940.0,249.1" stroke="#081838" stroke-width="1.2"/>
<path d="M961.4,249.3 L961.5,245.6 L961.7,241.8 L962.1,237.9 L962.7,234.0 L963.4,230.2 L964.2,226.4 L965.2,222.8 L966.3,219.2 L967.5,215.9 L968.8,212.8 L970.2,209.9 L971.7,207.2 L973.2,204.9 L974.8,202.9 L976.4,201.2 L978.0,199.8 L979.6,198.8 L981.2,198.2 L982.8,198.0 L984.3,198.2 L985.8,198.7 L987.2,199.6 L988.5,200.9 L989.7,202.5 L990.8,204.4 L991.8,206.7 L992.6,209.3 L993.3,212.1 L993.9,215.2 L994.3,218.5 L994.5,222.0 L994.6,225.7 L994.5,229.4 L994.3,233.2 L993.9,237.1 L993.3,241.0 L992.6,244.8 L991.8,248.6 L990.8,252.2 L989.7,255.8 L988.5,259.1 L987.2,262.2 L985.8,265.1 L984.3,267.8 L982.8,270.1 L981.2,272.1 L979.6,273.8 L978.0,275.2 L976.4,276.2 L974.8,276.8 L973.2,277.0 L971.7,276.8 L970.2,276.3 L968.8,275.4 L967.5,274.1 L966.3,272.5 L965.2,270.6 L964.2,268.3 L963.4,265.7 L962.7,262.9 L962.1,259.8 L961.7,256.5 L961.5,253.0Z" fill="#1f66c8" stroke="#081838" stroke-width="1.5"/>
<path d="M1034.2,234.4 L1035.2,234.9 L1036.1,235.8 L1036.9,236.8 L1037.7,238.2 L1038.3,239.7 L1038.9,241.4 L1039.4,243.3 L1039.8,245.4 L1040.1,247.7 L1040.3,250.0 L1040.3,252.5 L1040.3,255.1 L1040.2,257.7 L1039.9,260.3 L1039.5,263.0 L1039.1,265.6 L1038.5,268.2 L1037.9,270.7 L1037.1,273.1 L1036.3,275.4 L1035.4,277.6 L1034.5,279.6 L1033.5,281.4 L1032.4,283.0 L1031.4,284.5 L1030.3,285.7 L1029.2,286.6 L1028.0,287.3 L1026.9,287.8 L1025.9,288.0 L1024.8,287.9 L1023.8,287.6 L972.8,264.1 L971.8,263.5 L970.9,262.7 L970.1,261.6 L969.3,260.3 L968.7,258.8 L968.1,257.0 L967.6,255.1 L967.2,253.0 L966.9,250.8 L966.7,248.4 L966.7,246.0 L966.7,243.4 L966.8,240.8 L967.1,238.1 L967.5,235.5 L967.9,232.9 L968.5,230.3 L969.1,227.8 L969.9,225.3 L970.7,223.0 L971.6,220.9 L972.5,218.9 L973.5,217.0 L974.6,215.4 L975.6,214.0 L976.7,212.8 L977.8,211.9 L979.0,211.2 L980.1,210.7 L981.1,210.5 L982.2,210.6 L983.2,210.9Z" fill="url(#g2S)" stroke="#081838" stroke-width="1.5"/>
<path d="M1027.3,236.7 L976.3,213.3" stroke="#081838" stroke-width="1.2"/>
<path d="M1018.1,275.8 L967.1,252.3" stroke="#081838" stroke-width="1.2"/>
<path d="M1002.8,277.9 L1001.8,277.3 L1000.9,276.5 L1000.1,275.4 L999.3,274.1 L998.7,272.6 L998.1,270.8 L997.6,268.9 L997.2,266.8 L996.9,264.6 L996.7,262.2 L996.7,259.8 L996.7,257.2 L996.8,254.6 L997.1,251.9 L997.5,249.3 L997.9,246.7 L998.5,244.1 L999.1,241.6 L999.9,239.1 L1000.7,236.8 L1001.6,234.7 L1002.5,232.7 L1003.5,230.8 L1004.6,229.2 L1005.6,227.8 L1006.7,226.6 L1007.8,225.7 L1009.0,225.0 L1010.1,224.5 L1011.1,224.3 L1012.2,224.4 L1013.2,224.7" fill="none" stroke="#081838" stroke-width="1"/>
<path d="M1060.6,233.1 L1062.0,233.9 L1063.3,235.2 L1064.6,236.7 L1065.7,238.6 L1066.7,240.9 L1067.5,243.4 L1068.2,246.2 L1068.8,249.3 L1069.2,252.6 L1069.5,256.0 L1069.6,259.6 L1069.5,263.4 L1069.3,267.2 L1068.9,271.1 L1068.4,274.9 L1067.7,278.8 L1066.9,282.6 L1066.0,286.2 L1064.9,289.8 L1063.7,293.2 L1062.4,296.3 L1061.0,299.3 L1059.6,301.9 L1058.0,304.3 L1056.5,306.4 L1054.9,308.1 L1053.2,309.5 L1051.6,310.5 L1050.0,311.2 L1048.4,311.5 L1046.9,311.4 L1045.4,310.9 L1021.4,299.9 L1020.0,299.0 L1018.7,297.8 L1017.4,296.2 L1016.3,294.3 L1015.3,292.1 L1014.5,289.6 L1013.8,286.7 L1013.2,283.7 L1012.8,280.4 L1012.5,276.9 L1012.4,273.3 L1012.5,269.6 L1012.7,265.8 L1013.1,261.9 L1013.6,258.0 L1014.3,254.2 L1015.1,250.4 L1016.0,246.7 L1017.1,243.2 L1018.3,239.8 L1019.6,236.6 L1021.0,233.7 L1022.4,231.0 L1024.0,228.6 L1025.5,226.6 L1027.1,224.8 L1028.8,223.4 L1030.4,222.4 L1032.0,221.8 L1033.6,221.5 L1035.1,221.6 L1036.6,222.0Z" fill="url(#g2R)" stroke="#081838" stroke-width="1.5"/>
<path d="M1050.5,236.5 L1026.5,225.5" stroke="#081838" stroke-width="1.2"/>
<path d="M1037.0,293.7 L1013.0,282.7" stroke="#081838" stroke-width="1.2"/>
<path d="M1036.4,283.9 L1036.5,280.1 L1036.7,276.3 L1037.1,272.4 L1037.7,268.5 L1038.4,264.7 L1039.2,260.9 L1040.2,257.3 L1041.3,253.7 L1042.5,250.4 L1043.8,247.3 L1045.2,244.4 L1046.7,241.7 L1048.2,239.4 L1049.8,237.4 L1051.4,235.7 L1053.0,234.3 L1054.6,233.3 L1056.2,232.7 L1057.8,232.5 L1059.3,232.7 L1060.8,233.2 L1062.2,234.1 L1063.5,235.4 L1064.7,237.0 L1065.8,238.9 L1066.8,241.2 L1067.6,243.8 L1068.3,246.6 L1068.9,249.7 L1069.3,253.0 L1069.5,256.5 L1069.6,260.1 L1069.5,263.9 L1069.3,267.7 L1068.9,271.6 L1068.3,275.5 L1067.6,279.3 L1066.8,283.1 L1065.8,286.7 L1064.7,290.3 L1063.5,293.6 L1062.2,296.7 L1060.8,299.6 L1059.3,302.3 L1057.8,304.6 L1056.2,306.6 L1054.6,308.3 L1053.0,309.7 L1051.4,310.7 L1049.8,311.3 L1048.2,311.5 L1046.7,311.3 L1045.2,310.8 L1043.8,309.9 L1042.5,308.6 L1041.3,307.0 L1040.2,305.1 L1039.2,302.8 L1038.4,300.2 L1037.7,297.4 L1037.1,294.3 L1036.7,291.0 L1036.5,287.5Z" fill="#1f66c8" stroke="#081838" stroke-width="1.5"/>
<path d="M1040.8,280.7 L1040.9,277.9 L1041.1,275.1 L1041.3,272.3 L1041.7,269.5 L1042.3,266.6 L1042.9,263.9 L1043.6,261.2 L1044.4,258.6 L1045.3,256.1 L1046.2,253.8 L1047.3,251.7 L1048.3,249.8 L1049.5,248.1 L1050.6,246.6 L1051.8,245.3 L1053.0,244.3 L1054.2,243.6 L1055.4,243.2 L1056.5,243.0 L1057.7,243.1 L1058.7,243.5 L1059.8,244.2 L1060.7,245.1 L1061.6,246.3 L1062.4,247.7 L1063.1,249.4 L1063.7,251.3 L1064.3,253.4 L1064.7,255.6 L1064.9,258.1 L1065.1,260.6 L1065.2,263.3 L1065.1,266.1 L1064.9,268.9 L1064.7,271.7 L1064.3,274.5 L1063.7,277.4 L1063.1,280.1 L1062.4,282.8 L1061.6,285.4 L1060.7,287.9 L1059.8,290.2 L1058.7,292.3 L1057.7,294.2 L1056.5,295.9 L1055.4,297.4 L1054.2,298.7 L1053.0,299.7 L1051.8,300.4 L1050.6,300.8 L1049.5,301.0 L1048.3,300.9 L1047.3,300.5 L1046.2,299.8 L1045.3,298.9 L1044.4,297.7 L1043.6,296.3 L1042.9,294.6 L1042.3,292.7 L1041.7,290.6 L1041.3,288.4 L1041.1,285.9 L1040.9,283.4Z" fill="#1e62c2" stroke="#081838" stroke-width="1.2"/>
<path d="M1058.6,243.4 L1047.4,300.6" stroke="#081838" stroke-width="0.9"/>
<path d="M1058.5,292.8 L1047.5,251.2" stroke="#081838" stroke-width="0.9"/>
<linearGradient id="g3L" gradientUnits="userSpaceOnUse" x1="862.1" y1="332.4" x2="829.9" y2="402.5"><stop offset="0" stop-color="#2a76d6"/><stop offset="0.095" stop-color="#2874d4"/><stop offset="0.095" stop-color="#2a7ee0"/><stop offset="0.469" stop-color="#3c9cf4"/><stop offset="0.772" stop-color="#6cc6ff"/><stop offset="0.842" stop-color="#b8eeff"/><stop offset="0.842" stop-color="#1d60c4"/><stop offset="1" stop-color="#1f64c8"/></linearGradient>
<linearGradient id="g3S" gradientUnits="userSpaceOnUse" x1="893.0" y1="360.1" x2="871.0" y2="407.9"><stop offset="0" stop-color="#2a76d6"/><stop offset="0.095" stop-color="#2874d4"/><stop offset="0.095" stop-color="#2a7ee0"/><stop offset="0.469" stop-color="#3c9cf4"/><stop offset="0.772" stop-color="#6cc6ff"/><stop offset="0.842" stop-color="#b8eeff"/><stop offset="0.842" stop-color="#1d60c4"/><stop offset="1" stop-color="#1f64c8"/></linearGradient>
<linearGradient id="g3R" gradientUnits="userSpaceOnUse" x1="936.1" y1="366.5" x2="903.9" y2="436.5"><stop offset="0" stop-color="#2a76d6"/><stop offset="0.095" stop-color="#2874d4"/><stop offset="0.095" stop-color="#2a7ee0"/><stop offset="0.469" stop-color="#3c9cf4"/><stop offset="0.772" stop-color="#6cc6ff"/><stop offset="0.842" stop-color="#b8eeff"/><stop offset="0.842" stop-color="#1d60c4"/><stop offset="1" stop-color="#1f64c8"/></linearGradient>
<path d="M864.6,333.6 L866.0,334.4 L867.3,335.7 L868.6,337.2 L869.7,339.1 L870.7,341.4 L871.5,343.9 L872.2,346.7 L872.8,349.8 L873.2,353.1 L873.5,356.5 L873.6,360.1 L873.5,363.9 L873.3,367.7 L872.9,371.6 L872.4,375.4 L871.7,379.3 L870.9,383.1 L870.0,386.7 L868.9,390.3 L867.7,393.7 L866.4,396.8 L865.0,399.8 L863.6,402.4 L862.0,404.8 L860.5,406.9 L858.9,408.6 L857.2,410.0 L855.6,411.0 L854.0,411.7 L852.4,412.0 L850.9,411.9 L849.4,411.4 L827.4,401.3 L826.0,400.4 L824.7,399.2 L823.4,397.7 L822.3,395.7 L821.3,393.5 L820.5,391.0 L819.8,388.2 L819.2,385.1 L818.8,381.8 L818.5,378.4 L818.4,374.7 L818.5,371.0 L818.7,367.2 L819.1,363.3 L819.6,359.4 L820.3,355.6 L821.1,351.8 L822.0,348.1 L823.1,344.6 L824.3,341.2 L825.6,338.1 L827.0,335.1 L828.4,332.5 L830.0,330.1 L831.5,328.0 L833.1,326.3 L834.8,324.9 L836.4,323.8 L838.0,323.2 L839.6,322.9 L841.1,323.0 L842.6,323.5Z" fill="url(#g3L)" stroke="#081838" stroke-width="1.5"/>
<path d="M854.5,337.0 L832.5,326.9" stroke="#081838" stroke-width="1.2"/>
<path d="M841.0,394.2 L819.0,384.1" stroke="#081838" stroke-width="1.2"/>
<path d="M840.4,384.4 L840.5,380.6 L840.7,376.8 L841.1,372.9 L841.7,369.0 L842.4,365.2 L843.2,361.4 L844.2,357.8 L845.3,354.2 L846.5,350.9 L847.8,347.8 L849.2,344.9 L850.7,342.2 L852.2,339.9 L853.8,337.9 L855.4,336.2 L857.0,334.8 L858.6,333.8 L860.2,333.2 L861.8,333.0 L863.3,333.2 L864.8,333.7 L866.2,334.6 L867.5,335.9 L868.7,337.5 L869.8,339.4 L870.8,341.7 L871.6,344.3 L872.3,347.1 L872.9,350.2 L873.3,353.5 L873.5,357.0 L873.6,360.6 L873.5,364.4 L873.3,368.2 L872.9,372.1 L872.3,376.0 L871.6,379.8 L870.8,383.6 L869.8,387.2 L868.7,390.8 L867.5,394.1 L866.2,397.2 L864.8,400.1 L863.3,402.8 L861.8,405.1 L860.2,407.1 L858.6,408.8 L857.0,410.2 L855.4,411.2 L853.8,411.8 L852.2,412.0 L850.7,411.8 L849.2,411.3 L847.8,410.4 L846.5,409.1 L845.3,407.5 L844.2,405.6 L843.2,403.3 L842.4,400.7 L841.7,397.9 L841.1,394.8 L840.7,391.5 L840.5,388.0Z" fill="#1f66c8" stroke="#081838" stroke-width="1.5"/>
<path d="M913.2,369.4 L914.2,369.9 L915.1,370.8 L915.9,371.8 L916.7,373.2 L917.3,374.7 L917.9,376.4 L918.4,378.3 L918.8,380.4 L919.1,382.7 L919.3,385.0 L919.3,387.5 L919.3,390.1 L919.2,392.7 L918.9,395.3 L918.5,398.0 L918.1,400.6 L917.5,403.2 L916.9,405.7 L916.1,408.1 L915.3,410.4 L914.4,412.6 L913.5,414.6 L912.5,416.4 L911.4,418.0 L910.4,419.5 L909.3,420.7 L908.2,421.6 L907.0,422.3 L905.9,422.8 L904.9,423.0 L903.8,422.9 L902.8,422.6 L851.8,399.1 L850.8,398.5 L849.9,397.7 L849.1,396.6 L848.3,395.3 L847.7,393.8 L847.1,392.0 L846.6,390.1 L846.2,388.0 L845.9,385.8 L845.7,383.4 L845.7,381.0 L845.7,378.4 L845.8,375.8 L846.1,373.1 L846.5,370.5 L846.9,367.9 L847.5,365.3 L848.1,362.8 L848.9,360.3 L849.7,358.0 L850.6,355.9 L851.5,353.9 L852.5,352.0 L853.6,350.4 L854.6,349.0 L855.7,347.8 L856.8,346.9 L858.0,346.2 L859.1,345.7 L860.1,345.5 L861.2,345.6 L862.2,345.9Z" fill="url(#g3S)" stroke="#081838" stroke-width="1.5"/>
<path d="M906.3,371.7 L855.3,348.3" stroke="#081838" stroke-width="1.2"/>
<path d="M897.1,410.8 L846.1,387.3" stroke="#081838" stroke-width="1.2"/>
<path d="M881.8,412.9 L880.8,412.3 L879.9,411.5 L879.1,410.4 L878.3,409.1 L877.7,407.6 L877.1,405.8 L876.6,403.9 L876.2,401.8 L875.9,399.6 L875.7,397.2 L875.7,394.8 L875.7,392.2 L875.8,389.6 L876.1,386.9 L876.5,384.3 L876.9,381.7 L877.5,379.1 L878.1,376.6 L878.9,374.1 L879.7,371.8 L880.6,369.7 L881.5,367.7 L882.5,365.8 L883.6,364.2 L884.6,362.8 L885.7,361.6 L886.8,360.7 L888.0,360.0 L889.1,359.5 L890.1,359.3 L891.2,359.4 L892.2,359.7" fill="none" stroke="#081838" stroke-width="1"/>
<path d="M939.6,368.1 L941.0,368.9 L942.3,370.2 L943.6,371.7 L944.7,373.6 L945.7,375.9 L946.5,378.4 L947.2,381.2 L947.8,384.3 L948.2,387.6 L948.5,391.0 L948.6,394.6 L948.5,398.4 L948.3,402.2 L947.9,406.1 L947.4,409.9 L946.7,413.8 L945.9,417.6 L945.0,421.2 L943.9,424.8 L942.7,428.2 L941.4,431.3 L940.0,434.3 L938.6,436.9 L937.0,439.3 L935.5,441.4 L933.9,443.1 L932.2,444.5 L930.6,445.5 L929.0,446.2 L927.4,446.5 L925.9,446.4 L924.4,445.9 L900.4,434.9 L899.0,434.0 L897.7,432.8 L896.4,431.2 L895.3,429.3 L894.3,427.1 L893.5,424.6 L892.8,421.7 L892.2,418.7 L891.8,415.4 L891.5,411.9 L891.4,408.3 L891.5,404.6 L891.7,400.8 L892.1,396.9 L892.6,393.0 L893.3,389.2 L894.1,385.4 L895.0,381.7 L896.1,378.2 L897.3,374.8 L898.6,371.6 L900.0,368.7 L901.4,366.0 L903.0,363.6 L904.5,361.6 L906.1,359.8 L907.8,358.4 L909.4,357.4 L911.0,356.8 L912.6,356.5 L914.1,356.6 L915.6,357.0Z" fill="url(#g3R)" stroke="#081838" stroke-width="1.5"/>
<path d="M929.5,371.5 L905.5,360.5" stroke="#081838" stroke-width="1.2"/>
<path d="M916.0,428.7 L892.0,417.7" stroke="#081838" stroke-width="1.2"/>
<path d="M915.4,418.9 L915.5,415.1 L915.7,411.3 L916.1,407.4 L916.7,403.5 L917.4,399.7 L918.2,395.9 L919.2,392.3 L920.3,388.7 L921.5,385.4 L922.8,382.3 L924.2,379.4 L925.7,376.7 L927.2,374.4 L928.8,372.4 L930.4,370.7 L932.0,369.3 L933.6,368.3 L935.2,367.7 L936.8,367.5 L938.3,367.7 L939.8,368.2 L941.2,369.1 L942.5,370.4 L943.7,372.0 L944.8,373.9 L945.8,376.2 L946.6,378.8 L947.3,381.6 L947.9,384.7 L948.3,388.0 L948.5,391.5 L948.6,395.1 L948.5,398.9 L948.3,402.7 L947.9,406.6 L947.3,410.5 L946.6,414.3 L945.8,418.1 L944.8,421.7 L943.7,425.3 L942.5,428.6 L941.2,431.7 L939.8,434.6 L938.3,437.3 L936.8,439.6 L935.2,441.6 L933.6,443.3 L932.0,444.7 L930.4,445.7 L928.8,446.3 L927.2,446.5 L925.7,446.3 L924.2,445.8 L922.8,444.9 L921.5,443.6 L920.3,442.0 L919.2,440.1 L918.2,437.8 L917.4,435.2 L916.7,432.4 L916.1,429.3 L915.7,426.0 L915.5,422.5Z" fill="#1f66c8" stroke="#081838" stroke-width="1.5"/>
<path d="M919.8,415.7 L919.9,412.9 L920.1,410.1 L920.3,407.3 L920.7,404.5 L921.3,401.6 L921.9,398.9 L922.6,396.2 L923.4,393.6 L924.3,391.1 L925.2,388.8 L926.3,386.7 L927.3,384.8 L928.5,383.1 L929.6,381.6 L930.8,380.3 L932.0,379.3 L933.2,378.6 L934.4,378.2 L935.5,378.0 L936.7,378.1 L937.7,378.5 L938.8,379.2 L939.7,380.1 L940.6,381.3 L941.4,382.7 L942.1,384.4 L942.7,386.3 L943.3,388.4 L943.7,390.6 L943.9,393.1 L944.1,395.6 L944.2,398.3 L944.1,401.1 L943.9,403.9 L943.7,406.7 L943.3,409.5 L942.7,412.4 L942.1,415.1 L941.4,417.8 L940.6,420.4 L939.7,422.9 L938.8,425.2 L937.7,427.3 L936.7,429.2 L935.5,430.9 L934.4,432.4 L933.2,433.7 L932.0,434.7 L930.8,435.4 L929.6,435.8 L928.5,436.0 L927.3,435.9 L926.3,435.5 L925.2,434.8 L924.3,433.9 L923.4,432.7 L922.6,431.3 L921.9,429.6 L921.3,427.7 L920.7,425.6 L920.3,423.4 L920.1,420.9 L919.9,418.4Z" fill="#1e62c2" stroke="#081838" stroke-width="1.2"/>
<path d="M937.6,378.4 L926.4,435.6" stroke="#081838" stroke-width="0.9"/>
<path d="M937.5,427.8 L926.5,386.2" stroke="#081838" stroke-width="0.9"/>
<linearGradient id="g4L" gradientUnits="userSpaceOnUse" x1="990.1" y1="408.4" x2="957.9" y2="478.5"><stop offset="0" stop-color="#2a76d6"/><stop offset="0.095" stop-color="#2874d4"/><stop offset="0.095" stop-color="#2a7ee0"/><stop offset="0.469" stop-color="#3c9cf4"/><stop offset="0.772" stop-color="#6cc6ff"/><stop offset="0.842" stop-color="#b8eeff"/><stop offset="0.842" stop-color="#1d60c4"/><stop offset="1" stop-color="#1f64c8"/></linearGradient>
<linearGradient id="g4S" gradientUnits="userSpaceOnUse" x1="1021.0" y1="436.1" x2="999.0" y2="483.9"><stop offset="0" stop-color="#2a76d6"/><stop offset="0.095" stop-color="#2874d4"/><stop offset="0.095" stop-color="#2a7ee0"/><stop offset="0.469" stop-color="#3c9cf4"/><stop offset="0.772" stop-color="#6cc6ff"/><stop offset="0.842" stop-color="#b8eeff"/><stop offset="0.842" stop-color="#1d60c4"/><stop offset="1" stop-color="#1f64c8"/></linearGradient>
<linearGradient id="g4R" gradientUnits="userSpaceOnUse" x1="1064.1" y1="442.5" x2="1031.9" y2="512.5"><stop offset="0" stop-color="#2a76d6"/><stop offset="0.095" stop-color="#2874d4"/><stop offset="0.095" stop-color="#2a7ee0"/><stop offset="0.469" stop-color="#3c9cf4"/><stop offset="0.772" stop-color="#6cc6ff"/><stop offset="0.842" stop-color="#b8eeff"/><stop offset="0.842" stop-color="#1d60c4"/><stop offset="1" stop-color="#1f64c8"/></linearGradient>
<path d="M992.6,409.6 L994.0,410.4 L995.3,411.7 L996.6,413.2 L997.7,415.1 L998.7,417.4 L999.5,419.9 L1000.2,422.7 L1000.8,425.8 L1001.2,429.1 L1001.5,432.5 L1001.6,436.1 L1001.5,439.9 L1001.3,443.7 L1000.9,447.6 L1000.4,451.4 L999.7,455.3 L998.9,459.1 L998.0,462.7 L996.9,466.3 L995.7,469.7 L994.4,472.8 L993.0,475.8 L991.6,478.4 L990.0,480.8 L988.5,482.9 L986.9,484.6 L985.2,486.0 L983.6,487.0 L982.0,487.7 L980.4,488.0 L978.9,487.9 L977.4,487.4 L955.4,477.3 L954.0,476.4 L952.7,475.2 L951.4,473.7 L950.3,471.7 L949.3,469.5 L948.5,467.0 L947.8,464.2 L947.2,461.1 L946.8,457.8 L946.5,454.4 L946.4,450.7 L946.5,447.0 L946.7,443.2 L947.1,439.3 L947.6,435.4 L948.3,431.6 L949.1,427.8 L950.0,424.1 L951.1,420.6 L952.3,417.2 L953.6,414.1 L955.0,411.1 L956.4,408.5 L958.0,406.1 L959.5,404.0 L961.1,402.3 L962.8,400.9 L964.4,399.8 L966.0,399.2 L967.6,398.9 L969.1,399.0 L970.6,399.5Z" fill="url(#g4L)" stroke="#081838" stroke-width="1.5"/>
<path d="M982.5,413.0 L960.5,402.9" stroke="#081838" stroke-width="1.2"/>
<path d="M969.0,470.2 L947.0,460.1" stroke="#081838" stroke-width="1.2"/>
<path d="M968.4,460.4 L968.5,456.6 L968.7,452.8 L969.1,448.9 L969.7,445.0 L970.4,441.2 L971.2,437.4 L972.2,433.8 L973.3,430.2 L974.5,426.9 L975.8,423.8 L977.2,420.9 L978.7,418.2 L980.2,415.9 L981.8,413.9 L983.4,412.2 L985.0,410.8 L986.6,409.8 L988.2,409.2 L989.8,409.0 L991.3,409.2 L992.8,409.7 L994.2,410.6 L995.5,411.9 L996.7,413.5 L997.8,415.4 L998.8,417.7 L999.6,420.3 L1000.3,423.1 L1000.9,426.2 L1001.3,429.5 L1001.5,433.0 L1001.6,436.6 L1001.5,440.4 L1001.3,444.2 L1000.9,448.1 L1000.3,452.0 L999.6,455.8 L998.8,459.6 L997.8,463.2 L996.7,466.8 L995.5,470.1 L994.2,473.2 L992.8,476.1 L991.3,478.8 L989.8,481.1 L988.2,483.1 L986.6,484.8 L985.0,486.2 L983.4,487.2 L981.8,487.8 L980.2,488.0 L978.7,487.8 L977.2,487.3 L975.8,486.4 L974.5,485.1 L973.3,483.5 L972.2,481.6 L971.2,479.3 L970.4,476.7 L969.7,473.9 L969.1,470.8 L968.7,467.5 L968.5,464.0Z" fill="#1f66c8" stroke="#081838" stroke-width="1.5"/>
<path d="M1041.2,445.4 L1042.2,445.9 L1043.1,446.8 L1043.9,447.8 L1044.7,449.2 L1045.3,450.7 L1045.9,452.4 L1046.4,454.3 L1046.8,456.4 L1047.1,458.7 L1047.3,461.0 L1047.3,463.5 L1047.3,466.1 L1047.2,468.7 L1046.9,471.3 L1046.5,474.0 L1046.1,476.6 L1045.5,479.2 L1044.9,481.7 L1044.1,484.1 L1043.3,486.4 L1042.4,488.6 L1041.5,490.6 L1040.5,492.4 L1039.4,494.0 L1038.4,495.5 L1037.3,496.7 L1036.2,497.6 L1035.0,498.3 L1033.9,498.8 L1032.9,499.0 L1031.8,498.9 L1030.8,498.6 L979.8,475.1 L978.8,474.5 L977.9,473.7 L977.1,472.6 L976.3,471.3 L975.7,469.8 L975.1,468.0 L974.6,466.1 L974.2,464.0 L973.9,461.8 L973.7,459.4 L973.7,457.0 L973.7,454.4 L973.8,451.8 L974.1,449.1 L974.5,446.5 L974.9,443.9 L975.5,441.3 L976.1,438.8 L976.9,436.3 L977.7,434.0 L978.6,431.9 L979.5,429.9 L980.5,428.0 L981.6,426.4 L982.6,425.0 L983.7,423.8 L984.8,422.9 L986.0,422.2 L987.1,421.7 L988.1,421.5 L989.2,421.6 L990.2,421.9Z" fill="url(#g4S)" stroke="#081838" stroke-width="1.5"/>
<path d="M1034.3,447.7 L983.3,424.3" stroke="#081838" stroke-width="1.2"/>
<path d="M1025.1,486.8 L974.1,463.3" stroke="#081838" stroke-width="1.2"/>
<path d="M1009.8,488.9 L1008.8,488.3 L1007.9,487.5 L1007.1,486.4 L1006.3,485.1 L1005.7,483.6 L1005.1,481.8 L1004.6,479.9 L1004.2,477.8 L1003.9,475.6 L1003.7,473.2 L1003.7,470.8 L1003.7,468.2 L1003.8,465.6 L1004.1,462.9 L1004.5,460.3 L1004.9,457.7 L1005.5,455.1 L1006.1,452.6 L1006.9,450.1 L1007.7,447.8 L1008.6,445.7 L1009.5,443.7 L1010.5,441.8 L1011.6,440.2 L1012.6,438.8 L1013.7,437.6 L1014.8,436.7 L1016.0,436.0 L1017.1,435.5 L1018.1,435.3 L1019.2,435.4 L1020.2,435.7" fill="none" stroke="#081838" stroke-width="1"/>
<path d="M1067.6,444.1 L1069.0,444.9 L1070.3,446.2 L1071.6,447.7 L1072.7,449.6 L1073.7,451.9 L1074.5,454.4 L1075.2,457.2 L1075.8,460.3 L1076.2,463.6 L1076.5,467.0 L1076.6,470.6 L1076.5,474.4 L1076.3,478.2 L1075.9,482.1 L1075.4,485.9 L1074.7,489.8 L1073.9,493.6 L1073.0,497.2 L1071.9,500.8 L1070.7,504.2 L1069.4,507.3 L1068.0,510.3 L1066.6,512.9 L1065.0,515.3 L1063.5,517.4 L1061.9,519.1 L1060.2,520.5 L1058.6,521.5 L1057.0,522.2 L1055.4,522.5 L1053.9,522.4 L1052.4,521.9 L1028.4,510.9 L1027.0,510.0 L1025.7,508.8 L1024.4,507.2 L1023.3,505.3 L1022.3,503.1 L1021.5,500.6 L1020.8,497.7 L1020.2,494.7 L1019.8,491.4 L1019.5,487.9 L1019.4,484.3 L1019.5,480.6 L1019.7,476.8 L1020.1,472.9 L1020.6,469.0 L1021.3,465.2 L1022.1,461.4 L1023.0,457.7 L1024.1,454.2 L1025.3,450.8 L1026.6,447.6 L1028.0,444.7 L1029.4,442.0 L1031.0,439.6 L1032.5,437.6 L1034.1,435.8 L1035.8,434.4 L1037.4,433.4 L1039.0,432.8 L1040.6,432.5 L1042.1,432.6 L1043.6,433.0Z" fill="url(#g4R)" stroke="#081838" stroke-width="1.5"/>
<path d="M1057.5,447.5 L1033.5,436.5" stroke="#081838" stroke-width="1.2"/>
<path d="M1044.0,504.7 L1020.0,493.7" stroke="#081838" stroke-width="1.2"/>
<path d="M1043.4,494.9 L1043.5,491.1 L1043.7,487.3 L1044.1,483.4 L1044.7,479.5 L1045.4,475.7 L1046.2,471.9 L1047.2,468.3 L1048.3,464.7 L1049.5,461.4 L1050.8,458.3 L1052.2,455.4 L1053.7,452.7 L1055.2,450.4 L1056.8,448.4 L1058.4,446.7 L1060.0,445.3 L1061.6,444.3 L1063.2,443.7 L1064.8,443.5 L1066.3,443.7 L1067.8,444.2 L1069.2,445.1 L1070.5,446.4 L1071.7,448.0 L1072.8,449.9 L1073.8,452.2 L1074.6,454.8 L1075.3,457.6 L1075.9,460.7 L1076.3,464.0 L1076.5,467.5 L1076.6,471.1 L1076.5,474.9 L1076.3,478.7 L1075.9,482.6 L1075.3,486.5 L1074.6,490.3 L1073.8,494.1 L1072.8,497.7 L1071.7,501.3 L1070.5,504.6 L1069.2,507.7 L1067.8,510.6 L1066.3,513.3 L1064.8,515.6 L1063.2,517.6 L1061.6,519.3 L1060.0,520.7 L1058.4,521.7 L1056.8,522.3 L1055.2,522.5 L1053.7,522.3 L1052.2,521.8 L1050.8,520.9 L1049.5,519.6 L1048.3,518.0 L1047.2,516.1 L1046.2,513.8 L1045.4,511.2 L1044.7,508.4 L1044.1,505.3 L1043.7,502.0 L1043.5,498.5Z" fill="#1f66c8" stroke="#081838" stroke-width="1.5"/>
<path d="M1047.8,491.7 L1047.9,488.9 L1048.1,486.1 L1048.3,483.3 L1048.7,480.5 L1049.3,477.6 L1049.9,474.9 L1050.6,472.2 L1051.4,469.6 L1052.3,467.1 L1053.2,464.8 L1054.3,462.7 L1055.3,460.8 L1056.5,459.1 L1057.6,457.6 L1058.8,456.3 L1060.0,455.3 L1061.2,454.6 L1062.4,454.2 L1063.5,454.0 L1064.7,454.1 L1065.7,454.5 L1066.8,455.2 L1067.7,456.1 L1068.6,457.3 L1069.4,458.7 L1070.1,460.4 L1070.7,462.3 L1071.3,464.4 L1071.7,466.6 L1071.9,469.1 L1072.1,471.6 L1072.2,474.3 L1072.1,477.1 L1071.9,479.9 L1071.7,482.7 L1071.3,485.5 L1070.7,488.4 L1070.1,491.1 L1069.4,493.8 L1068.6,496.4 L1067.7,498.9 L1066.8,501.2 L1065.7,503.3 L1064.7,505.2 L1063.5,506.9 L1062.4,508.4 L1061.2,509.7 L1060.0,510.7 L1058.8,511.4 L1057.6,511.8 L1056.5,512.0 L1055.3,511.9 L1054.3,511.5 L1053.2,510.8 L1052.3,509.9 L1051.4,508.7 L1050.6,507.3 L1049.9,505.6 L1049.3,503.7 L1048.7,501.6 L1048.3,499.4 L1048.1,496.9 L1047.9,494.4Z" fill="#1e62c2" stroke="#081838" stroke-width="1.2"/>
<path d="M1065.6,454.4 L1054.4,511.6" stroke="#081838" stroke-width="0.9"/>
<path d="M1065.5,503.8 L1054.5,462.2" stroke="#081838" stroke-width="0.9"/>
<linearGradient id="g5L" gradientUnits="userSpaceOnUse" x1="869.1" y1="542.9" x2="836.9" y2="613.0"><stop offset="0" stop-color="#2a76d6"/><stop offset="0.095" stop-color="#2874d4"/><stop offset="0.095" stop-color="#2a7ee0"/><stop offset="0.469" stop-color="#3c9cf4"/><stop offset="0.772" stop-color="#6cc6ff"/><stop offset="0.842" stop-color="#b8eeff"/><stop offset="0.842" stop-color="#1d60c4"/><stop offset="1" stop-color="#1f64c8"/></linearGradient>
<linearGradient id="g5S" gradientUnits="userSpaceOnUse" x1="900.0" y1="570.6" x2="878.0" y2="618.4"><stop offset="0" stop-color="#2a76d6"/><stop offset="0.095" stop-color="#2874d4"/><stop offset="0.095" stop-color="#2a7ee0"/><stop offset="0.469" stop-color="#3c9cf4"/><stop offset="0.772" stop-color="#6cc6ff"/><stop offset="0.842" stop-color="#b8eeff"/><stop offset="0.842" stop-color="#1d60c4"/><stop offset="1" stop-color="#1f64c8"/></linearGradient>
<linearGradient id="g5R" gradientUnits="userSpaceOnUse" x1="943.1" y1="577.0" x2="910.9" y2="647.0"><stop offset="0" stop-color="#2a76d6"/><stop offset="0.095" stop-color="#2874d4"/><stop offset="0.095" stop-color="#2a7ee0"/><stop offset="0.469" stop-color="#3c9cf4"/><stop offset="0.772" stop-color="#6cc6ff"/><stop offset="0.842" stop-color="#b8eeff"/><stop offset="0.842" stop-color="#1d60c4"/><stop offset="1" stop-color="#1f64c8"/></linearGradient>
<path d="M871.6,544.1 L873.0,544.9 L874.3,546.2 L875.6,547.7 L876.7,549.6 L877.7,551.9 L878.5,554.4 L879.2,557.2 L879.8,560.3 L880.2,563.6 L880.5,567.0 L880.6,570.6 L880.5,574.4 L880.3,578.2 L879.9,582.1 L879.4,585.9 L878.7,589.8 L877.9,593.6 L877.0,597.2 L875.9,600.8 L874.7,604.2 L873.4,607.3 L872.0,610.3 L870.6,612.9 L869.0,615.3 L867.5,617.4 L865.9,619.1 L864.2,620.5 L862.6,621.5 L861.0,622.2 L859.4,622.5 L857.9,622.4 L856.4,621.9 L834.4,611.8 L833.0,610.9 L831.7,609.7 L830.4,608.2 L829.3,606.2 L828.3,604.0 L827.5,601.5 L826.8,598.7 L826.2,595.6 L825.8,592.3 L825.5,588.9 L825.4,585.2 L825.5,581.5 L825.7,577.7 L826.1,573.8 L826.6,569.9 L827.3,566.1 L828.1,562.3 L829.0,558.6 L830.1,555.1 L831.3,551.7 L832.6,548.6 L834.0,545.6 L835.4,543.0 L837.0,540.6 L838.5,538.5 L840.1,536.8 L841.8,535.4 L843.4,534.3 L845.0,533.7 L846.6,533.4 L848.1,533.5 L849.6,534.0Z" fill="url(#g5L)" stroke="#081838" stroke-width="1.5"/>
<path d="M861.5,547.5 L839.5,537.4" stroke="#081838" stroke-width="1.2"/>
<path d="M848.0,604.7 L826.0,594.6" stroke="#081838" stroke-width="1.2"/>
<path d="M847.4,594.9 L847.5,591.1 L847.7,587.3 L848.1,583.4 L848.7,579.5 L849.4,575.7 L850.2,571.9 L851.2,568.3 L852.3,564.7 L853.5,561.4 L854.8,558.3 L856.2,555.4 L857.7,552.7 L859.2,550.4 L860.8,548.4 L862.4,546.7 L864.0,545.3 L865.6,544.3 L867.2,543.7 L868.8,543.5 L870.3,543.7 L871.8,544.2 L873.2,545.1 L874.5,546.4 L875.7,548.0 L876.8,549.9 L877.8,552.2 L878.6,554.8 L879.3,557.6 L879.9,560.7 L880.3,564.0 L880.5,567.5 L880.6,571.1 L880.5,574.9 L880.3,578.7 L879.9,582.6 L879.3,586.5 L878.6,590.3 L877.8,594.1 L876.8,597.7 L875.7,601.3 L874.5,604.6 L873.2,607.7 L871.8,610.6 L870.3,613.3 L868.8,615.6 L867.2,617.6 L865.6,619.3 L864.0,620.7 L862.4,621.7 L860.8,622.3 L859.2,622.5 L857.7,622.3 L856.2,621.8 L854.8,620.9 L853.5,619.6 L852.3,618.0 L851.2,616.1 L850.2,613.8 L849.4,611.2 L848.7,608.4 L848.1,605.3 L847.7,602.0 L847.5,598.5Z" fill="#1f66c8" stroke="#081838" stroke-width="1.5"/>
<path d="M920.2,579.9 L921.2,580.4 L922.1,581.3 L922.9,582.3 L923.7,583.7 L924.3,585.2 L924.9,586.9 L925.4,588.8 L925.8,590.9 L926.1,593.2 L926.3,595.5 L926.3,598.0 L926.3,600.6 L926.2,603.2 L925.9,605.8 L925.5,608.5 L925.1,611.1 L924.5,613.7 L923.9,616.2 L923.1,618.6 L922.3,620.9 L921.4,623.1 L920.5,625.1 L919.5,626.9 L918.4,628.5 L917.4,630.0 L916.3,631.2 L915.2,632.1 L914.0,632.8 L912.9,633.3 L911.9,633.5 L910.8,633.4 L909.8,633.1 L858.8,609.6 L857.8,609.0 L856.9,608.2 L856.1,607.1 L855.3,605.8 L854.7,604.3 L854.1,602.5 L853.6,600.6 L853.2,598.5 L852.9,596.3 L852.7,593.9 L852.7,591.5 L852.7,588.9 L852.8,586.3 L853.1,583.6 L853.5,581.0 L853.9,578.4 L854.5,575.8 L855.1,573.3 L855.9,570.8 L856.7,568.5 L857.6,566.4 L858.5,564.4 L859.5,562.5 L860.6,560.9 L861.6,559.5 L862.7,558.3 L863.8,557.4 L865.0,556.7 L866.1,556.2 L867.1,556.0 L868.2,556.1 L869.2,556.4Z" fill="url(#g5S)" stroke="#081838" stroke-width="1.5"/>
<path d="M913.3,582.2 L862.3,558.8" stroke="#081838" stroke-width="1.2"/>
<path d="M904.1,621.3 L853.1,597.8" stroke="#081838" stroke-width="1.2"/>
<path d="M888.8,623.4 L887.8,622.8 L886.9,622.0 L886.1,620.9 L885.3,619.6 L884.7,618.1 L884.1,616.3 L883.6,614.4 L883.2,612.3 L882.9,610.1 L882.7,607.7 L882.7,605.3 L882.7,602.7 L882.8,600.1 L883.1,597.4 L883.5,594.8 L883.9,592.2 L884.5,589.6 L885.1,587.1 L885.9,584.6 L886.7,582.3 L887.6,580.2 L888.5,578.2 L889.5,576.3 L890.6,574.7 L891.6,573.3 L892.7,572.1 L893.8,571.2 L895.0,570.5 L896.1,570.0 L897.1,569.8 L898.2,569.9 L899.2,570.2" fill="none" stroke="#081838" stroke-width="1"/>
<path d="M946.6,578.6 L948.0,579.4 L949.3,580.7 L950.6,582.2 L951.7,584.1 L952.7,586.4 L953.5,588.9 L954.2,591.7 L954.8,594.8 L955.2,598.1 L955.5,601.5 L955.6,605.1 L955.5,608.9 L955.3,612.7 L954.9,616.6 L954.4,620.4 L953.7,624.3 L952.9,628.1 L952.0,631.7 L950.9,635.3 L949.7,638.7 L948.4,641.8 L947.0,644.8 L945.6,647.4 L944.0,649.8 L942.5,651.9 L940.9,653.6 L939.2,655.0 L937.6,656.0 L936.0,656.7 L934.4,657.0 L932.9,656.9 L931.4,656.4 L907.4,645.4 L906.0,644.5 L904.7,643.3 L903.4,641.7 L902.3,639.8 L901.3,637.6 L900.5,635.1 L899.8,632.2 L899.2,629.2 L898.8,625.9 L898.5,622.4 L898.4,618.8 L898.5,615.1 L898.7,611.3 L899.1,607.4 L899.6,603.5 L900.3,599.7 L901.1,595.9 L902.0,592.2 L903.1,588.7 L904.3,585.3 L905.6,582.1 L907.0,579.2 L908.4,576.5 L910.0,574.1 L911.5,572.1 L913.1,570.3 L914.8,568.9 L916.4,567.9 L918.0,567.3 L919.6,567.0 L921.1,567.1 L922.6,567.5Z" fill="url(#g5R)" stroke="#081838" stroke-width="1.5"/>
<path d="M936.5,582.0 L912.5,571.0" stroke="#081838" stroke-width="1.2"/>
<path d="M923.0,639.2 L899.0,628.2" stroke="#081838" stroke-width="1.2"/>
<path d="M922.4,629.4 L922.5,625.6 L922.7,621.8 L923.1,617.9 L923.7,614.0 L924.4,610.2 L925.2,606.4 L926.2,602.8 L927.3,599.2 L928.5,595.9 L929.8,592.8 L931.2,589.9 L932.7,587.2 L934.2,584.9 L935.8,582.9 L937.4,581.2 L939.0,579.8 L940.6,578.8 L942.2,578.2 L943.8,578.0 L945.3,578.2 L946.8,578.7 L948.2,579.6 L949.5,580.9 L950.7,582.5 L951.8,584.4 L952.8,586.7 L953.6,589.3 L954.3,592.1 L954.9,595.2 L955.3,598.5 L955.5,602.0 L955.6,605.6 L955.5,609.4 L955.3,613.2 L954.9,617.1 L954.3,621.0 L953.6,624.8 L952.8,628.6 L951.8,632.2 L950.7,635.8 L949.5,639.1 L948.2,642.2 L946.8,645.1 L945.3,647.8 L943.8,650.1 L942.2,652.1 L940.6,653.8 L939.0,655.2 L937.4,656.2 L935.8,656.8 L934.2,657.0 L932.7,656.8 L931.2,656.3 L929.8,655.4 L928.5,654.1 L927.3,652.5 L926.2,650.6 L925.2,648.3 L924.4,645.7 L923.7,642.9 L923.1,639.8 L922.7,636.5 L922.5,633.0Z" fill="#1f66c8" stroke="#081838" stroke-width="1.5"/>
<path d="M926.8,626.2 L926.9,623.4 L927.1,620.6 L927.3,617.8 L927.7,615.0 L928.3,612.1 L928.9,609.4 L929.6,606.7 L930.4,604.1 L931.3,601.6 L932.2,599.3 L933.3,597.2 L934.3,595.3 L935.5,593.6 L936.6,592.1 L937.8,590.8 L939.0,589.8 L940.2,589.1 L941.4,588.7 L942.5,588.5 L943.7,588.6 L944.7,589.0 L945.8,589.7 L946.7,590.6 L947.6,591.8 L948.4,593.2 L949.1,594.9 L949.7,596.8 L950.3,598.9 L950.7,601.1 L950.9,603.6 L951.1,606.1 L951.2,608.8 L951.1,611.6 L950.9,614.4 L950.7,617.2 L950.3,620.0 L949.7,622.9 L949.1,625.6 L948.4,628.3 L947.6,630.9 L946.7,633.4 L945.8,635.7 L944.7,637.8 L943.7,639.7 L942.5,641.4 L941.4,642.9 L940.2,644.2 L939.0,645.2 L937.8,645.9 L936.6,646.3 L935.5,646.5 L934.3,646.4 L933.3,646.0 L932.2,645.3 L931.3,644.4 L930.4,643.2 L929.6,641.8 L928.9,640.1 L928.3,638.2 L927.7,636.1 L927.3,633.9 L927.1,631.4 L926.9,628.9Z" fill="#1e62c2" stroke="#081838" stroke-width="1.2"/>
<path d="M944.6,588.9 L933.4,646.1" stroke="#081838" stroke-width="0.9"/>
<path d="M944.5,638.3 L933.5,596.7" stroke="#081838" stroke-width="0.9"/><circle cx="979.6" cy="2.5" r="1.4" fill="none" stroke="#30e8ff" stroke-width="1"/>
<circle cx="972.6" cy="5.9" r="1.4" fill="none" stroke="#30e8ff" stroke-width="1"/>
<circle cx="964.9" cy="24.7" r="1.4" fill="none" stroke="#30e8ff" stroke-width="1"/>
<circle cx="964.6" cy="46.9" r="1.4" fill="none" stroke="#30e8ff" stroke-width="1"/>
<circle cx="968.9" cy="55.4" r="1.4" fill="none" stroke="#30e8ff" stroke-width="1"/>
<circle cx="1009.2" cy="16.1" r="1.4" fill="none" stroke="#30e8ff" stroke-width="1"/>
<circle cx="998.9" cy="23.3" r="1.4" fill="none" stroke="#30e8ff" stroke-width="1"/>
<circle cx="992.8" cy="46.5" r="1.4" fill="none" stroke="#30e8ff" stroke-width="1"/>
<circle cx="995.9" cy="66.5" r="1.4" fill="none" stroke="#30e8ff" stroke-width="1"/>
<circle cx="991.8" cy="9.5" r="1.4" fill="none" stroke="#30e8ff" stroke-width="1"/>
<circle cx="979.9" cy="31.6" r="1.4" fill="none" stroke="#30e8ff" stroke-width="1"/>
<circle cx="980.8" cy="57.8" r="1.4" fill="none" stroke="#30e8ff" stroke-width="1"/>
<circle cx="860.6" cy="137.0" r="1.4" fill="none" stroke="#30e8ff" stroke-width="1"/>
<circle cx="853.6" cy="140.4" r="1.4" fill="none" stroke="#30e8ff" stroke-width="1"/>
<circle cx="845.9" cy="159.2" r="1.4" fill="none" stroke="#30e8ff" stroke-width="1"/>
<circle cx="845.6" cy="181.4" r="1.4" fill="none" stroke="#30e8ff" stroke-width="1"/>
<circle cx="849.9" cy="189.9" r="1.4" fill="none" stroke="#30e8ff" stroke-width="1"/>
<circle cx="890.2" cy="150.6" r="1.4" fill="none" stroke="#30e8ff" stroke-width="1"/>
<circle cx="879.9" cy="157.8" r="1.4" fill="none" stroke="#30e8ff" stroke-width="1"/>
<circle cx="873.8" cy="181.0" r="1.4" fill="none" stroke="#30e8ff" stroke-width="1"/>
<circle cx="876.9" cy="201.0" r="1.4" fill="none" stroke="#30e8ff" stroke-width="1"/>
<circle cx="872.8" cy="144.0" r="1.4" fill="none" stroke="#30e8ff" stroke-width="1"/>
<circle cx="860.9" cy="166.1" r="1.4" fill="none" stroke="#30e8ff" stroke-width="1"/>
<circle cx="861.8" cy="192.3" r="1.4" fill="none" stroke="#30e8ff" stroke-width="1"/>
<circle cx="986.6" cy="212.5" r="1.4" fill="none" stroke="#30e8ff" stroke-width="1"/>
<circle cx="979.6" cy="215.9" r="1.4" fill="none" stroke="#30e8ff" stroke-width="1"/>
<circle cx="971.9" cy="234.7" r="1.4" fill="none" stroke="#30e8ff" stroke-width="1"/>
<circle cx="971.6" cy="256.9" r="1.4" fill="none" stroke="#30e8ff" stroke-width="1"/>
<circle cx="975.9" cy="265.4" r="1.4" fill="none" stroke="#30e8ff" stroke-width="1"/>
<circle cx="1016.2" cy="226.1" r="1.4" fill="none" stroke="#30e8ff" stroke-width="1"/>
<circle cx="1005.9" cy="233.3" r="1.4" fill="none" stroke="#30e8ff" stroke-width="1"/>
<circle cx="999.8" cy="256.5" r="1.4" fill="none" stroke="#30e8ff" stroke-width="1"/>
<circle cx="1002.9" cy="276.5" r="1.4" fill="none" stroke="#30e8ff" stroke-width="1"/>
<circle cx="998.8" cy="219.5" r="1.4" fill="none" stroke="#30e8ff" stroke-width="1"/>
<circle cx="986.9" cy="241.6" r="1.4" fill="none" stroke="#30e8ff" stroke-width="1"/>
<circle cx="987.8" cy="267.8" r="1.4" fill="none" stroke="#30e8ff" stroke-width="1"/>
<circle cx="865.6" cy="347.5" r="1.4" fill="none" stroke="#30e8ff" stroke-width="1"/>
<circle cx="858.6" cy="350.9" r="1.4" fill="none" stroke="#30e8ff" stroke-width="1"/>
<circle cx="850.9" cy="369.7" r="1.4" fill="none" stroke="#30e8ff" stroke-width="1"/>
<circle cx="850.6" cy="391.9" r="1.4" fill="none" stroke="#30e8ff" stroke-width="1"/>
<circle cx="854.9" cy="400.4" r="1.4" fill="none" stroke="#30e8ff" stroke-width="1"/>
<circle cx="895.2" cy="361.1" r="1.4" fill="none" stroke="#30e8ff" stroke-width="1"/>
<circle cx="884.9" cy="368.3" r="1.4" fill="none" stroke="#30e8ff" stroke-width="1"/>
<circle cx="878.8" cy="391.5" r="1.4" fill="none" stroke="#30e8ff" stroke-width="1"/>
<circle cx="881.9" cy="411.5" r="1.4" fill="none" stroke="#30e8ff" stroke-width="1"/>
<circle cx="877.8" cy="354.5" r="1.4" fill="none" stroke="#30e8ff" stroke-width="1"/>
<circle cx="865.9" cy="376.6" r="1.4" fill="none" stroke="#30e8ff" stroke-width="1"/>
<circle cx="866.8" cy="402.8" r="1.4" fill="none" stroke="#30e8ff" stroke-width="1"/>
<circle cx="993.6" cy="423.5" r="1.4" fill="none" stroke="#30e8ff" stroke-width="1"/>
<circle cx="986.6" cy="426.9" r="1.4" fill="none" stroke="#30e8ff" stroke-width="1"/>
<circle cx="978.9" cy="445.7" r="1.4" fill="none" stroke="#30e8ff" stroke-width="1"/>
<circle cx="978.6" cy="467.9" r="1.4" fill="none" stroke="#30e8ff" stroke-width="1"/>
<circle cx="982.9" cy="476.4" r="1.4" fill="none" stroke="#30e8ff" stroke-width="1"/>
<circle cx="1023.2" cy="437.1" r="1.4" fill="none" stroke="#30e8ff" stroke-width="1"/>
<circle cx="1012.9" cy="444.3" r="1.4" fill="none" stroke="#30e8ff" stroke-width="1"/>
<circle cx="1006.8" cy="467.5" r="1.4" fill="none" stroke="#30e8ff" stroke-width="1"/>
<circle cx="1009.9" cy="487.5" r="1.4" fill="none" stroke="#30e8ff" stroke-width="1"/>
<circle cx="1005.8" cy="430.5" r="1.4" fill="none" stroke="#30e8ff" stroke-width="1"/>
<circle cx="993.9" cy="452.6" r="1.4" fill="none" stroke="#30e8ff" stroke-width="1"/>
<circle cx="994.8" cy="478.8" r="1.4" fill="none" stroke="#30e8ff" stroke-width="1"/><path d="M917.7,637.2 L916.4,636.4 L915.2,635.1 L914.2,633.4 L913.3,631.2 L912.5,628.8 L912.0,626.0 L911.6,622.9 L911.5,619.6 L911.5,616.1 L911.7,612.6 L912.1,609.0 L912.7,605.4 L913.5,601.9 L914.5,598.6 L915.6,595.4 L916.8,592.5 L918.1,589.9 L919.5,587.6 L921.0,585.8 L922.5,584.3 L924.0,583.3 L925.5,582.7 L926.9,582.7 L928.3,583.0" fill="none" stroke="#e8201a" stroke-width="1.5"/>
<path d="M903.7,630.8 L902.4,629.9 L901.2,628.6 L900.2,626.9 L899.3,624.8 L898.5,622.3 L898.0,619.5 L897.6,616.4 L897.5,613.2 L897.5,609.7 L897.7,606.2 L898.1,602.6 L898.7,599.0 L899.5,595.5 L900.5,592.1 L901.6,589.0 L902.8,586.1 L904.1,583.5 L905.5,581.2 L907.0,579.3 L908.5,577.9 L910.0,576.9 L911.5,576.3 L912.9,576.2 L914.3,576.6" fill="none" stroke="#e8201a" stroke-width="1.5"/>
<path d="M888.7,623.9 L887.4,623.0 L886.2,621.7 L885.2,620.0 L884.3,617.9 L883.5,615.4 L883.0,612.6 L882.6,609.5 L882.5,606.3 L882.5,602.8 L882.7,599.3 L883.1,595.7 L883.7,592.1 L884.5,588.6 L885.5,585.2 L886.6,582.1 L887.8,579.2 L889.1,576.6 L890.5,574.3 L892.0,572.4 L893.5,571.0 L895.0,570.0 L896.5,569.4 L897.9,569.3 L899.3,569.7" fill="none" stroke="#e8201a" stroke-width="1.5"/>
<path d="M873.7,617.0 L872.4,616.1 L871.2,614.8 L870.2,613.1 L869.3,611.0 L868.5,608.5 L868.0,605.7 L867.6,602.6 L867.5,599.4 L867.5,595.9 L867.7,592.4 L868.1,588.8 L868.7,585.2 L869.5,581.7 L870.5,578.3 L871.6,575.2 L872.8,572.3 L874.1,569.7 L875.5,567.4 L877.0,565.5 L878.5,564.1 L880.0,563.1 L881.5,562.5 L882.9,562.4 L884.3,562.8" fill="none" stroke="#e8201a" stroke-width="1.5"/>
<path d="M858.7,610.1 L857.4,609.2 L856.2,607.9 L855.2,606.2 L854.3,604.1 L853.5,601.6 L853.0,598.8 L852.6,595.7 L852.5,592.5 L852.5,589.0 L852.7,585.5 L853.1,581.9 L853.7,578.3 L854.5,574.8 L855.5,571.4 L856.6,568.3 L857.8,565.4 L859.1,562.8 L860.5,560.5 L862.0,558.6 L863.5,557.2 L865.0,556.2 L866.5,555.6 L867.9,555.5 L869.3,555.9" fill="none" stroke="#e8201a" stroke-width="1.5"/>
<path d="M928.3,583.0 L929.6,583.9 L930.8,585.2 L931.8,586.9 L932.7,589.0 L933.5,591.5 L934.0,594.3 L934.4,597.4 L934.5,600.7 L934.5,604.1 L934.3,607.7 L933.9,611.3 L933.3,614.9 L932.5,618.4 L931.5,621.7 L930.4,624.9 L929.2,627.8 L927.9,630.4 L926.5,632.6 L925.0,634.5 L923.5,636.0 L922.0,637.0 L920.5,637.5 L919.1,637.6 L917.7,637.2" fill="none" stroke="#e8201a" stroke-width="1.5"/>
<path d="M928.3,583.0 L869.3,555.9" stroke="#e8201a" stroke-width="1.5"/>
<path d="M919.5,587.6 L860.5,560.5" stroke="#e8201a" stroke-width="1.5"/>
<path d="M912.7,605.4 L853.7,578.3" stroke="#e8201a" stroke-width="1.5"/>
<path d="M912.0,626.0 L853.0,598.8" stroke="#e8201a" stroke-width="1.5"/>
<path d="M917.7,637.2 L858.7,610.1" stroke="#e8201a" stroke-width="1.5"/>
<path d="M928.3,583.0 L905.5,581.2" stroke="#e8201a" stroke-width="1.3"/>
<path d="M912.7,605.4 L905.5,581.2" stroke="#e8201a" stroke-width="1.3"/>
<path d="M912.7,605.4 L898.0,619.5" stroke="#e8201a" stroke-width="1.3"/>
<path d="M917.7,637.2 L898.0,619.5" stroke="#e8201a" stroke-width="1.3"/>
<path d="M905.5,581.2 L899.3,569.7" stroke="#e8201a" stroke-width="1.3"/>
<path d="M905.5,581.2 L883.7,592.1" stroke="#e8201a" stroke-width="1.3"/>
<path d="M898.0,619.5 L883.7,592.1" stroke="#e8201a" stroke-width="1.3"/>
<path d="M898.0,619.5 L888.7,623.9" stroke="#e8201a" stroke-width="1.3"/>
<path d="M899.3,569.7 L875.5,567.4" stroke="#e8201a" stroke-width="1.3"/>
<path d="M883.7,592.1 L875.5,567.4" stroke="#e8201a" stroke-width="1.3"/>
<path d="M883.7,592.1 L868.0,605.7" stroke="#e8201a" stroke-width="1.3"/>
<path d="M888.7,623.9 L868.0,605.7" stroke="#e8201a" stroke-width="1.3"/>
<path d="M875.5,567.4 L869.3,555.9" stroke="#e8201a" stroke-width="1.3"/>
<path d="M875.5,567.4 L853.7,578.3" stroke="#e8201a" stroke-width="1.3"/>
<path d="M868.0,605.7 L853.7,578.3" stroke="#e8201a" stroke-width="1.3"/>
<path d="M868.0,605.7 L858.7,610.1" stroke="#e8201a" stroke-width="1.3"/>
<circle cx="928.3" cy="583.0" r="1.8" fill="none" stroke="#ff8020" stroke-width="1"/>
<circle cx="919.5" cy="587.6" r="1.8" fill="none" stroke="#ff8020" stroke-width="1"/>
<circle cx="912.7" cy="605.4" r="1.8" fill="none" stroke="#ff8020" stroke-width="1"/>
<circle cx="912.0" cy="626.0" r="1.8" fill="none" stroke="#ff8020" stroke-width="1"/>
<circle cx="917.7" cy="637.2" r="1.8" fill="none" stroke="#ff8020" stroke-width="1"/>
<circle cx="914.3" cy="576.6" r="1.8" fill="none" stroke="#ff8020" stroke-width="1"/>
<circle cx="905.5" cy="581.2" r="1.8" fill="none" stroke="#ff8020" stroke-width="1"/>
<circle cx="898.7" cy="599.0" r="1.8" fill="none" stroke="#ff8020" stroke-width="1"/>
<circle cx="898.0" cy="619.5" r="1.8" fill="none" stroke="#ff8020" stroke-width="1"/>
<circle cx="903.7" cy="630.8" r="1.8" fill="none" stroke="#ff8020" stroke-width="1"/>
<circle cx="899.3" cy="569.7" r="1.8" fill="none" stroke="#ff8020" stroke-width="1"/>
<circle cx="890.5" cy="574.3" r="1.8" fill="none" stroke="#ff8020" stroke-width="1"/>
<circle cx="883.7" cy="592.1" r="1.8" fill="none" stroke="#ff8020" stroke-width="1"/>
<circle cx="883.0" cy="612.6" r="1.8" fill="none" stroke="#ff8020" stroke-width="1"/>
<circle cx="888.7" cy="623.9" r="1.8" fill="none" stroke="#ff8020" stroke-width="1"/>
<circle cx="884.3" cy="562.8" r="1.8" fill="none" stroke="#ff8020" stroke-width="1"/>
<circle cx="875.5" cy="567.4" r="1.8" fill="none" stroke="#ff8020" stroke-width="1"/>
<circle cx="868.7" cy="585.2" r="1.8" fill="none" stroke="#ff8020" stroke-width="1"/>
<circle cx="868.0" cy="605.7" r="1.8" fill="none" stroke="#ff8020" stroke-width="1"/>
<circle cx="873.7" cy="617.0" r="1.8" fill="none" stroke="#ff8020" stroke-width="1"/>
<circle cx="869.3" cy="555.9" r="1.8" fill="none" stroke="#ff8020" stroke-width="1"/>
<circle cx="860.5" cy="560.5" r="1.8" fill="none" stroke="#ff8020" stroke-width="1"/>
<circle cx="853.7" cy="578.3" r="1.8" fill="none" stroke="#ff8020" stroke-width="1"/>
<circle cx="853.0" cy="598.8" r="1.8" fill="none" stroke="#ff8020" stroke-width="1"/>
<circle cx="858.7" cy="610.1" r="1.8" fill="none" stroke="#ff8020" stroke-width="1"/><path d="M823,100 L839,633" stroke="#f0f038" stroke-width="2" stroke-dasharray="4 5 2 5" fill="none"/>
<path d="M852,140 L868,683" stroke="#f0f038" stroke-width="2" stroke-dasharray="4 5 2 5" fill="none"/>
<path d="M929,141 L946,685" stroke="#f0f038" stroke-width="2" stroke-dasharray="4 5 2 5" fill="none"/>
<path d="M946.5,60 L958.5,490" stroke="#f0f038" stroke-width="2" stroke-dasharray="4 5 2 5" fill="none"/>
<path d="M1024.6,0 L1036,434" stroke="#f0f038" stroke-width="2" stroke-dasharray="4 5 2 5" fill="none"/>
<path d="M1053,0 L1064.2,543" stroke="#f0f038" stroke-width="2" stroke-dasharray="4 5 2 5" fill="none"/>
<path d="M822,98 L929,141" stroke="#f0f038" stroke-width="2" stroke-dasharray="4 5 2 5" fill="none"/>
<path d="M800,179 L932,236" stroke="#f0f038" stroke-width="2" stroke-dasharray="4 5 2 5" fill="none"/>
<path d="M800,179 L808,171" stroke="#f0f038" stroke-width="2" stroke-dasharray="4 5 2 5" fill="none"/>
<path d="M972,197 L1081,246" stroke="#f0f038" stroke-width="2" stroke-dasharray="4 5 2 5" fill="none"/>
<path d="M1081,246 L1059,270" stroke="#f0f038" stroke-width="2" stroke-dasharray="4 5 2 5" fill="none"/>
<path d="M809,388 L937,442" stroke="#f0f038" stroke-width="2" stroke-dasharray="4 5 2 5" fill="none"/>
<path d="M809,388 L817,376" stroke="#f0f038" stroke-width="2" stroke-dasharray="4 5 2 5" fill="none"/>
<path d="M980,410 L1087,457" stroke="#f0f038" stroke-width="2" stroke-dasharray="4 5 2 5" fill="none"/>
<path d="M1087,457 L1064,477" stroke="#f0f038" stroke-width="2" stroke-dasharray="4 5 2 5" fill="none"/>
<path d="M814.5,597 L946,679" stroke="#f0f038" stroke-width="2" stroke-dasharray="4 5 2 5" fill="none"/>
<path d="M958,494 L1064,543" stroke="#f0f038" stroke-width="2" stroke-dasharray="4 5 2 5" fill="none"/>
<path d="M950,17 L1057,60" stroke="#f0f038" stroke-width="2" stroke-dasharray="4 5 2 5" fill="none"/>
<path d="M1057,25 L1076,36" stroke="#f0f038" stroke-width="2" stroke-dasharray="4 5 2 5" fill="none"/>
<path d="M1076,36 L1062,50" stroke="#f0f038" stroke-width="2" stroke-dasharray="4 5 2 5" fill="none"/>
<path d="M840,129 L939,19" stroke="#f0f038" stroke-width="2" stroke-dasharray="4 5 2 5" fill="none"/>
<path d="M866,122 L942,44" stroke="#f0f038" stroke-width="2" stroke-dasharray="4 5 2 5" fill="none"/>
<path d="M956,172 L1025,96" stroke="#f0f038" stroke-width="2" stroke-dasharray="4 5 2 5" fill="none"/>
<path d="M857,329 L926,256" stroke="#f0f038" stroke-width="2" stroke-dasharray="4 5 2 5" fill="none"/>
<path d="M955,387 L1027,308" stroke="#f0f038" stroke-width="2" stroke-dasharray="4 5 2 5" fill="none"/>
<path d="M864,540 L943,450" stroke="#f0f038" stroke-width="2" stroke-dasharray="4 5 2 5" fill="none"/>
<path d="M868,683 L1041,512" stroke="#f0f038" stroke-width="2" stroke-dasharray="4 5 2 5" fill="none"/>
<path d="M957,582 L1025,509" stroke="#f0f038" stroke-width="2" stroke-dasharray="4 5 2 5" fill="none"/>
<path d="M941.0,13.699999999999996 L1068.0,72.12" stroke="#f0f038" stroke-width="2" stroke-dasharray="4 5 2 5" fill="none"/>
<path d="M942.5,13.0 L946.0,16.0 L950.0,14.0 M946.0,16.0 L947.0,20.0" stroke="#f0f038" stroke-width="1.8" fill="none"/>
<path d="M822.0,148.2 L949.0,206.62" stroke="#f0f038" stroke-width="2" stroke-dasharray="4 5 2 5" fill="none"/>
<path d="M823.5,147.5 L827.0,150.5 L831.0,148.5 M827.0,150.5 L828.0,154.5" stroke="#f0f038" stroke-width="1.8" fill="none"/>
<path d="M948.0,223.7 L1075.0,282.12" stroke="#f0f038" stroke-width="2" stroke-dasharray="4 5 2 5" fill="none"/>
<path d="M949.5,223.0 L953.0,226.0 L957.0,224.0 M953.0,226.0 L954.0,230.0" stroke="#f0f038" stroke-width="1.8" fill="none"/>
<path d="M827.0,358.7 L954.0,417.12" stroke="#f0f038" stroke-width="2" stroke-dasharray="4 5 2 5" fill="none"/>
<path d="M828.5,358.0 L832.0,361.0 L836.0,359.0 M832.0,361.0 L833.0,365.0" stroke="#f0f038" stroke-width="1.8" fill="none"/>
<path d="M955.0,434.7 L1082.0,493.12" stroke="#f0f038" stroke-width="2" stroke-dasharray="4 5 2 5" fill="none"/>
<path d="M956.5,434.0 L960.0,437.0 L964.0,435.0 M960.0,437.0 L961.0,441.0" stroke="#f0f038" stroke-width="1.8" fill="none"/>
<path d="M834.0,569.2 L961.0,627.62" stroke="#f0f038" stroke-width="2" stroke-dasharray="4 5 2 5" fill="none"/>
<path d="M835.5,568.5 L839.0,571.5 L843.0,569.5 M839.0,571.5 L840.0,575.5" stroke="#f0f038" stroke-width="1.8" fill="none"/>
<path d="M812,92 L820,100 M820,92 L812,100" stroke="#f0f038" stroke-width="1"/>
<text x="823.5" y="98.5" fill="#f0f038" font-family="Liberation Sans" font-size="12">RP-4</text>
<path d="M937,314 L937,270 M937,314 L907,300 M937,314 L917,336" stroke="#f0f038" stroke-width="1.3" fill="none"/>
<text x="934" y="268" fill="#f0f038" font-family="Liberation Sans" font-size="9">Y</text>
<text x="903" y="299" fill="#f0f038" font-family="Liberation Sans" font-size="9">Z</text>
<text x="913" y="342" fill="#f0f038" font-family="Liberation Sans" font-size="9">X</text><g font-family="Liberation Sans" fill="#f4f4f8">
<text x="477" y="599" font-size="13">Y</text>
<text x="443" y="635" font-size="13">Z</text>
<text x="453" y="679" font-size="13">X</text>
</g>
<path d="M483,646 L483,618" stroke="#10b010" stroke-width="4.5"/>
<path d="M477.5,622 L483,609.5 L488.5,622 Z" fill="#18c018"/>
<path d="M482,645 L466,638" stroke="#0010b0" stroke-width="4.5"/>
<path d="M467,632.5 L459,634 L464,643 Z" fill="#0010c0" stroke="#0010c0" stroke-width="2"/>
<path d="M483,646 L471,659" stroke="#c01010" stroke-width="4.5"/>
<path d="M466,655 L467.5,666.5 L476,662 Z" fill="#d01010" stroke="#d01010" stroke-width="2"/>
<g stroke="#d8d0f8" stroke-width="1.6" stroke-linejoin="round">
<path d="M1176.9,31.4 C1177,18 1183,10 1193,9 L1196,10 L1196.5,41 Z" fill="#1a5f78"/>
<path d="M1184,38.4 L1196,41 L1182.7,56.4 Z" fill="#0a0a50"/>
<path d="M1182.7,56.4 C1184,35 1188,18 1196,9" fill="none"/>
<path d="M1180,64.5 L1194.8,53.8 L1213,61.5 L1213,72 L1201,82 L1186,80 C1181,78 1178,72 1180,64.5 Z" fill="#1a6070"/>
<path d="M1196.5,2 L1198,66" fill="none"/>
</g>
<circle cx="1195.5" cy="2.5" r="2.8" fill="#d8d0f8"/>
<rect x="1194.5" y="63.5" width="7" height="7" fill="#e00010"/>
<text x="1166" y="32" font-family="Liberation Sans" font-size="10" fill="#e8e840">Z</text>
<text x="1175" y="65" font-family="Liberation Sans" font-size="9" fill="#e8e840">X</text>

</svg>
</div>
<div id="dlg"></div>
<div id="shadow" class="a" style="left:739px;top:73px;width:6px;height:455px;background:linear-gradient(to right,rgba(0,0,0,0.16),rgba(0,0,0,0.04))"></div>
<svg class="a" style="left:0;top:76px" width="30" height="20" viewBox="0 76 30 20"><path d="M13,79.5 H18 V82 L23,85.8 H9 L13,82 Z" fill="#5e5e9e"/><path d="M9,88.2 H23 L18,91.5 V94.5 H13 V91.5 Z" fill="#5e5e9e"/><path d="M14.5,80.5 v4 M16.5,89 v4" stroke="#a0a0d0" stroke-width="1"/></svg>
<div class="t" style="left:29.5px;top:78px">Edit Predefined Field</div>
<svg class="a" style="left:717px;top:81px" width="12" height="12" viewBox="0 0 12 12"><path d="M1 1L11 11M11 1L1 11" stroke="#000" stroke-width="1.1"/></svg>

<div class="t" style="left:6px;top:107px">Name:</div><div class="t" style="left:54.5px;top:107px">Predefined Field-1</div>
<div class="t" style="left:6px;top:130px">Type:</div><div class="t" style="left:54.5px;top:130px">Stress</div>
<div class="t" style="left:6px;top:153px">Step:</div><div class="t" style="left:54.5px;top:153px">Initial</div>
<div class="t" style="left:6px;top:176px">Region:</div><div class="t" style="left:54.5px;top:176px">Set-43</div>
<svg class="a" style="left:99px;top:179px" width="13" height="17" viewBox="0 0 13 17"><path d="M1.5 1.5L11 9.5H7l3 5.5-2 1-3-5.5L1.5 13.5z" fill="#fff" stroke="#2a6ad0" stroke-width="1.3" stroke-linejoin="round"/></svg>

<div class="a" style="left:5px;top:202px;width:729px;height:1px;background:#a0a0a0"></div>
<div class="t" style="left:6px;top:211px">Specification:</div>
<div class="a" style="left:81px;top:208px;width:169px;height:25px;border:1px solid #a5a5a5;background:#fff"></div>
<div class="t" style="left:85px;top:211px">Direct specification</div>
<div class="a" style="left:237px;top:211px;width:12px;height:20px;border:1px solid #acacac;background:#e5e5e5"></div>
<svg class="a" style="left:238px;top:216px" width="10" height="8" viewBox="0 0 10 8"><path d="M1.5 2.5L5 6l3.5-3.5" stroke="#404040" stroke-width="1" fill="none"/></svg>

<div class="a" style="left:4px;top:245px;width:730px;height:245px;border:1px solid #dcdcdc"></div>
<div class="t" style="left:14px;top:237px;padding:0 2px;background:#fff;height:16px;line-height:21px;overflow:hidden">Data</div>
<div class="a" style="left:10px;top:260px;width:718px;height:225px;border:1px solid #a0a0a0;background:#fff"></div>
<div class="a" style="left:102px;top:263px;width:1px;height:48px;background:#ececec"></div>
<div class="a" style="left:202px;top:263px;width:1px;height:27px;background:#ececec"></div>
<div class="t" style="left:103px;top:266px;width:100px;text-align:center;font-weight:bold">Sigma11</div>
<div class="t" style="left:103px;top:292px;width:100px;text-align:center;font-size:11px">0</div>
<div class="a" style="left:302px;top:263px;width:1px;height:27px;background:#ececec"></div>
<div class="t" style="left:203px;top:266px;width:100px;text-align:center;font-weight:bold">Sigma22</div>
<div class="t" style="left:203px;top:292px;width:100px;text-align:center;font-size:11px">0</div>
<div class="a" style="left:402px;top:263px;width:1px;height:27px;background:#ececec"></div>
<div class="t" style="left:303px;top:266px;width:100px;text-align:center;font-weight:bold">Sigma33</div>
<div class="t" style="left:303px;top:292px;width:100px;text-align:center;font-size:11px">2676.69</div>
<div class="a" style="left:502px;top:263px;width:1px;height:27px;background:#ececec"></div>
<div class="t" style="left:403px;top:266px;width:100px;text-align:center;font-weight:bold">Sigma12</div>
<div class="t" style="left:403px;top:292px;width:100px;text-align:center;font-size:11px">0</div>
<div class="a" style="left:602px;top:263px;width:1px;height:27px;background:#ececec"></div>
<div class="t" style="left:503px;top:266px;width:100px;text-align:center;font-weight:bold">Sigma13</div>
<div class="t" style="left:503px;top:292px;width:100px;text-align:center;font-size:11px">0</div>
<div class="a" style="left:702px;top:263px;width:1px;height:27px;background:#ececec"></div>
<div class="t" style="left:603px;top:266px;width:100px;text-align:center;font-weight:bold">Sigma23</div>
<div class="a" style="left:604px;top:292px;width:99px;height:19px;background:#3399ff"></div>
<div class="t" style="left:603px;top:292px;width:100px;text-align:center;color:#fff;font-size:11px">0</div>
<div class="t" style="left:24px;top:292px;font-weight:bold">Stress value</div>
<div class="a" style="left:5px;top:495px;width:729px;height:1px;background:#a0a0a0"></div>
<div class="btn" style="left:158px;top:502px;width:54px;height:21px">OK</div>
<div class="btn" style="left:525px;top:502px;width:54px;height:21px">Cancel</div>

</body></html>
